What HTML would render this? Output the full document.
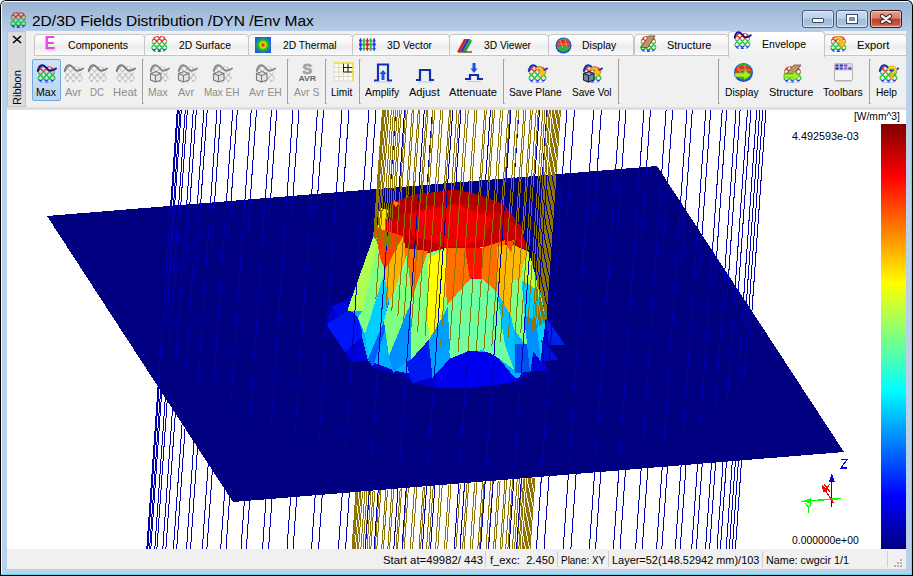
<!DOCTYPE html>
<html><head><meta charset="utf-8"><style>
html,body{margin:0;padding:0;width:913px;height:576px;overflow:hidden;background:#fff;font-family:"Liberation Sans", sans-serif}
</style></head><body>
<div style="position:relative;width:913px;height:576px;overflow:hidden">
<div style="position:absolute;left:0;top:0;width:913px;height:576px;background:#000;border-radius:6px 6px 0 0"></div>
<div style="position:absolute;left:1px;top:1px;width:911px;height:574px;background:#62d6ea;border-radius:5px 5px 0 0"></div>
<div style="position:absolute;left:1px;top:1px;width:910px;height:573px;background:#f4f8fc;border-radius:5px 5px 0 0"></div>
<div style="position:absolute;left:2px;top:2px;width:909px;height:572px;background:#bad1ea;border-radius:4px 4px 0 0"></div>
<div style="position:absolute;left:2px;top:2px;width:909px;height:29px;background:linear-gradient(#97b3d2,#b6cde7);border-radius:4px 4px 0 0"></div>
<svg style="position:absolute;left:8.7px;top:8.1px;" width="21" height="21" viewBox="0 0 21 21"><g transform="scale(0.89,0.97)"><defs><clipPath id="mc1"><path d="M2 10 Q2 4 10.5 4 Q19 4 19 10 L19.5 17 Q17 20.5 14 20.5 L7 20.5 Q3 20.5 1.5 17 Z"/></clipPath></defs><g clip-path="url(#mc1)" fill="none" stroke-width="1.5"><g clip-path="inset(0)"><path d="M-30.0 2 Q-22.0 10 -11.0 22 M-9.0 2 Q-17.0 10 -28.0 22 M-24.0 2 Q-16.0 10 -5.0 22 M-3.0 2 Q-11.0 10 -22.0 22 M-18.0 2 Q-10.0 10 1.0 22 M3.0 2 Q-5.0 10 -16.0 22 M-12.0 2 Q-4.0 10 7.0 22 M9.0 2 Q1.0 10 -10.0 22 M-6.0 2 Q2.0 10 13.0 22 M15.0 2 Q7.0 10 -4.0 22 M0.0 2 Q8.0 10 19.0 22 M21.0 2 Q13.0 10 2.0 22 M6.0 2 Q14.0 10 25.0 22 M27.0 2 Q19.0 10 8.0 22 M12.0 2 Q20.0 10 31.0 22 M33.0 2 Q25.0 10 14.0 22 M18.0 2 Q26.0 10 37.0 22 M39.0 2 Q31.0 10 20.0 22 M24.0 2 Q32.0 10 43.0 22 M45.0 2 Q37.0 10 26.0 22 M30.0 2 Q38.0 10 49.0 22 M51.0 2 Q43.0 10 32.0 22 " stroke="#e83a28" style="clip-path:inset(0 0 12px 0)"/></g><path d="M-30.0 2 Q-22.0 10 -11.0 22 M-9.0 2 Q-17.0 10 -28.0 22 M-24.0 2 Q-16.0 10 -5.0 22 M-3.0 2 Q-11.0 10 -22.0 22 M-18.0 2 Q-10.0 10 1.0 22 M3.0 2 Q-5.0 10 -16.0 22 M-12.0 2 Q-4.0 10 7.0 22 M9.0 2 Q1.0 10 -10.0 22 M-6.0 2 Q2.0 10 13.0 22 M15.0 2 Q7.0 10 -4.0 22 M0.0 2 Q8.0 10 19.0 22 M21.0 2 Q13.0 10 2.0 22 M6.0 2 Q14.0 10 25.0 22 M27.0 2 Q19.0 10 8.0 22 M12.0 2 Q20.0 10 31.0 22 M33.0 2 Q25.0 10 14.0 22 M18.0 2 Q26.0 10 37.0 22 M39.0 2 Q31.0 10 20.0 22 M24.0 2 Q32.0 10 43.0 22 M45.0 2 Q37.0 10 26.0 22 M30.0 2 Q38.0 10 49.0 22 M51.0 2 Q43.0 10 32.0 22 " stroke="#22c838" style="clip-path:inset(9px 0 5px 0)"/><path d="M-30.0 2 Q-22.0 10 -11.0 22 M-9.0 2 Q-17.0 10 -28.0 22 M-24.0 2 Q-16.0 10 -5.0 22 M-3.0 2 Q-11.0 10 -22.0 22 M-18.0 2 Q-10.0 10 1.0 22 M3.0 2 Q-5.0 10 -16.0 22 M-12.0 2 Q-4.0 10 7.0 22 M9.0 2 Q1.0 10 -10.0 22 M-6.0 2 Q2.0 10 13.0 22 M15.0 2 Q7.0 10 -4.0 22 M0.0 2 Q8.0 10 19.0 22 M21.0 2 Q13.0 10 2.0 22 M6.0 2 Q14.0 10 25.0 22 M27.0 2 Q19.0 10 8.0 22 M12.0 2 Q20.0 10 31.0 22 M33.0 2 Q25.0 10 14.0 22 M18.0 2 Q26.0 10 37.0 22 M39.0 2 Q31.0 10 20.0 22 M24.0 2 Q32.0 10 43.0 22 M45.0 2 Q37.0 10 26.0 22 M30.0 2 Q38.0 10 49.0 22 M51.0 2 Q43.0 10 32.0 22 " stroke="#2a4ae8" style="clip-path:inset(16px 0 0 0)"/></g></g></svg>
<div style="position:absolute;left:802px;top:10px;width:30px;height:16px;border:1px solid #4a5a78;border-radius:3px;background:linear-gradient(#c8daee 0%,#bcd2ea 45%,#9fbbd9 50%,#a9c4e0 85%,#c4d8ee 100%);box-shadow:inset 0 0 0 1px rgba(255,255,255,0.45)"></div>
<div style="position:absolute;left:836px;top:10px;width:30px;height:16px;border:1px solid #4a5a78;border-radius:3px;background:linear-gradient(#c8daee 0%,#bcd2ea 45%,#9fbbd9 50%,#a9c4e0 85%,#c4d8ee 100%);box-shadow:inset 0 0 0 1px rgba(255,255,255,0.45)"></div>
<div style="position:absolute;left:870px;top:10px;width:30px;height:16px;border:1px solid #3a1a1a;border-radius:3px;background:linear-gradient(#e8a090 0%,#d7826e 45%,#b8402c 50%,#c85a40 85%,#e09080 100%);box-shadow:inset 0 0 0 1px rgba(255,255,255,0.45)"></div>
<div style="position:absolute;left:812px;top:18px;width:10px;height:3px;background:#fff;border:1px solid #3c4a60;border-radius:1px"></div>
<div style="position:absolute;left:847px;top:15px;width:6px;height:4px;border:2px solid #fff;border-top-width:2px;outline:1px solid #3c4a60;background:#7890b0"></div>
<svg style="position:absolute;left:877px;top:12px;" width="18" height="13" viewBox="0 0 18 13"><path d="M5 4 L13 10 M13 4 L5 10" stroke="#3a2020" stroke-width="4.4" stroke-linecap="round"/><path d="M5 4 L13 10 M13 4 L5 10" stroke="#f8f0f0" stroke-width="2.4" stroke-linecap="round"/></svg>
<div style="position:absolute;left:7px;top:31px;width:899px;height:538px;background:#f0f0f0"></div>
<div style="position:absolute;left:7px;top:31px;width:17px;height:74px;border:1px solid #c4c4c4;background:#dcdcdc"></div>
<svg style="position:absolute;left:12px;top:35px;" width="10" height="9" viewBox="0 0 10 9"><path d="M1 1 L9 8 M9 1 L1 8" stroke="#000" stroke-width="1.6"/></svg>
<div style="position:absolute;left:7px;top:107px;width:899px;height:3px;background:#dfdfdf"></div>
<div style="position:absolute;left:34px;top:34px;width:109px;height:20px;border:1px solid #c6c6c6;border-radius:4px 4px 0 0;background:linear-gradient(#ffffff,#f4f4f4 45%,#ececec 55%,#fafafa)"></div>
<svg style="position:absolute;left:44px;top:35.5px;" width="17" height="17" viewBox="0 0 17 17"><ellipse cx="6.5" cy="13.5" rx="5.5" ry="1.5" fill="#d4d4d4"/><text x="0.5" y="13" font-family="Liberation Sans" font-weight="bold" font-size="17.5" fill="#e048e0" transform="scale(0.92,1)">E</text></svg>
<div style="position:absolute;left:144px;top:34px;width:103px;height:20px;border:1px solid #c6c6c6;border-radius:4px 4px 0 0;background:linear-gradient(#ffffff,#f4f4f4 45%,#ececec 55%,#fafafa)"></div>
<svg style="position:absolute;left:149.7px;top:32.2px;" width="21" height="21" viewBox="0 0 21 21"><g transform="scale(0.89,0.97)"><defs><clipPath id="mc2"><path d="M2 10 Q2 4 10.5 4 Q19 4 19 10 L19.5 17 Q17 20.5 14 20.5 L7 20.5 Q3 20.5 1.5 17 Z"/></clipPath></defs><g clip-path="url(#mc2)" fill="none" stroke-width="1.5"><g clip-path="inset(0)"><path d="M-30.0 2 Q-22.0 10 -11.0 22 M-9.0 2 Q-17.0 10 -28.0 22 M-24.0 2 Q-16.0 10 -5.0 22 M-3.0 2 Q-11.0 10 -22.0 22 M-18.0 2 Q-10.0 10 1.0 22 M3.0 2 Q-5.0 10 -16.0 22 M-12.0 2 Q-4.0 10 7.0 22 M9.0 2 Q1.0 10 -10.0 22 M-6.0 2 Q2.0 10 13.0 22 M15.0 2 Q7.0 10 -4.0 22 M0.0 2 Q8.0 10 19.0 22 M21.0 2 Q13.0 10 2.0 22 M6.0 2 Q14.0 10 25.0 22 M27.0 2 Q19.0 10 8.0 22 M12.0 2 Q20.0 10 31.0 22 M33.0 2 Q25.0 10 14.0 22 M18.0 2 Q26.0 10 37.0 22 M39.0 2 Q31.0 10 20.0 22 M24.0 2 Q32.0 10 43.0 22 M45.0 2 Q37.0 10 26.0 22 M30.0 2 Q38.0 10 49.0 22 M51.0 2 Q43.0 10 32.0 22 " stroke="#e83a28" style="clip-path:inset(0 0 12px 0)"/></g><path d="M-30.0 2 Q-22.0 10 -11.0 22 M-9.0 2 Q-17.0 10 -28.0 22 M-24.0 2 Q-16.0 10 -5.0 22 M-3.0 2 Q-11.0 10 -22.0 22 M-18.0 2 Q-10.0 10 1.0 22 M3.0 2 Q-5.0 10 -16.0 22 M-12.0 2 Q-4.0 10 7.0 22 M9.0 2 Q1.0 10 -10.0 22 M-6.0 2 Q2.0 10 13.0 22 M15.0 2 Q7.0 10 -4.0 22 M0.0 2 Q8.0 10 19.0 22 M21.0 2 Q13.0 10 2.0 22 M6.0 2 Q14.0 10 25.0 22 M27.0 2 Q19.0 10 8.0 22 M12.0 2 Q20.0 10 31.0 22 M33.0 2 Q25.0 10 14.0 22 M18.0 2 Q26.0 10 37.0 22 M39.0 2 Q31.0 10 20.0 22 M24.0 2 Q32.0 10 43.0 22 M45.0 2 Q37.0 10 26.0 22 M30.0 2 Q38.0 10 49.0 22 M51.0 2 Q43.0 10 32.0 22 " stroke="#22c838" style="clip-path:inset(9px 0 5px 0)"/><path d="M-30.0 2 Q-22.0 10 -11.0 22 M-9.0 2 Q-17.0 10 -28.0 22 M-24.0 2 Q-16.0 10 -5.0 22 M-3.0 2 Q-11.0 10 -22.0 22 M-18.0 2 Q-10.0 10 1.0 22 M3.0 2 Q-5.0 10 -16.0 22 M-12.0 2 Q-4.0 10 7.0 22 M9.0 2 Q1.0 10 -10.0 22 M-6.0 2 Q2.0 10 13.0 22 M15.0 2 Q7.0 10 -4.0 22 M0.0 2 Q8.0 10 19.0 22 M21.0 2 Q13.0 10 2.0 22 M6.0 2 Q14.0 10 25.0 22 M27.0 2 Q19.0 10 8.0 22 M12.0 2 Q20.0 10 31.0 22 M33.0 2 Q25.0 10 14.0 22 M18.0 2 Q26.0 10 37.0 22 M39.0 2 Q31.0 10 20.0 22 M24.0 2 Q32.0 10 43.0 22 M45.0 2 Q37.0 10 26.0 22 M30.0 2 Q38.0 10 49.0 22 M51.0 2 Q43.0 10 32.0 22 " stroke="#2a4ae8" style="clip-path:inset(16px 0 0 0)"/></g></g></svg>
<div style="position:absolute;left:248px;top:34px;width:103px;height:20px;border:1px solid #c6c6c6;border-radius:4px 4px 0 0;background:linear-gradient(#ffffff,#f4f4f4 45%,#ececec 55%,#fafafa)"></div>
<svg style="position:absolute;left:255px;top:37px;" width="17" height="17" viewBox="0 0 17 17"><defs><radialGradient id="th"><stop offset="0" stop-color="#e00000"/><stop offset="0.35" stop-color="#e0e000"/><stop offset="0.6" stop-color="#20c020"/><stop offset="1" stop-color="#2060e0"/></radialGradient></defs><rect x="0" y="0" width="16" height="16" fill="url(#th)"/></svg>
<div style="position:absolute;left:352px;top:34px;width:96px;height:20px;border:1px solid #c6c6c6;border-radius:4px 4px 0 0;background:linear-gradient(#ffffff,#f4f4f4 45%,#ececec 55%,#fafafa)"></div>
<svg style="position:absolute;left:359px;top:37px;" width="17" height="17" viewBox="0 0 17 17"><path d="M1.5 13 V2.5" stroke="#2040f0" stroke-width="1.6"/><path d="M-0.3 4.5 L1.5 0.5 L3.3 4.5 Z M-0.3 11 L1.5 14.5 L3.3 11 Z" fill="#2040f0"/><path d="M-0.2 7.5 H3.2" stroke="#2040f0" stroke-width="2.2"/><path d="M4.9 13 V2.5" stroke="#20c040" stroke-width="1.6"/><path d="M3.1 4.5 L4.9 0.5 L6.7 4.5 Z M3.1 11 L4.9 14.5 L6.7 11 Z" fill="#20c040"/><path d="M3.2 7.5 H6.6" stroke="#20c040" stroke-width="2.2"/><path d="M8.3 13 V2.5" stroke="#e02020" stroke-width="1.6"/><path d="M6.5 4.5 L8.3 0.5 L10.1 4.5 Z M6.5 11 L8.3 14.5 L10.1 11 Z" fill="#e02020"/><path d="M6.6 7.5 H10.0" stroke="#e02020" stroke-width="2.2"/><path d="M11.7 13 V2.5" stroke="#20c040" stroke-width="1.6"/><path d="M9.9 4.5 L11.7 0.5 L13.5 4.5 Z M9.9 11 L11.7 14.5 L13.5 11 Z" fill="#20c040"/><path d="M10.0 7.5 H13.4" stroke="#20c040" stroke-width="2.2"/><path d="M15.1 13 V2.5" stroke="#2040f0" stroke-width="1.6"/><path d="M13.3 4.5 L15.1 0.5 L16.9 4.5 Z M13.3 11 L15.1 14.5 L16.9 11 Z" fill="#2040f0"/><path d="M13.4 7.5 H16.8" stroke="#2040f0" stroke-width="2.2"/></svg>
<div style="position:absolute;left:449px;top:34px;width:98px;height:20px;border:1px solid #c6c6c6;border-radius:4px 4px 0 0;background:linear-gradient(#ffffff,#f4f4f4 45%,#ececec 55%,#fafafa)"></div>
<svg style="position:absolute;left:456px;top:37px;" width="17" height="17" viewBox="0 0 17 17"><path d="M1 15 L8 2 L11 2 L4 15 Z" fill="#d02020"/><path d="M4 15 L11 2 L14 2 L7 15 Z" fill="#2040c0"/><path d="M7 15 L14 2 L16 4 L10 15 Z" fill="#30a030"/><path d="M2 15 H16" stroke="#805020" stroke-width="1.5"/></svg>
<div style="position:absolute;left:548px;top:34px;width:84px;height:20px;border:1px solid #c6c6c6;border-radius:4px 4px 0 0;background:linear-gradient(#ffffff,#f4f4f4 45%,#ececec 55%,#fafafa)"></div>
<svg style="position:absolute;left:555px;top:37px;" width="17" height="17" viewBox="0 0 17 17"><circle cx="8.5" cy="8.5" r="8" fill="#2050d0"/><circle cx="8.5" cy="8" r="6.8" fill="#30b040"/><path d="M2 5 Q8.5 0 15 5 L14 10 Q8.5 6 3 10 Z" fill="#e03020"/><path d="M3 7 H14 M5 3 L8 11 M10 2 L12 10" stroke="#f09070" stroke-width="0.9"/></svg>
<div style="position:absolute;left:634px;top:34px;width:93px;height:20px;border:1px solid #c6c6c6;border-radius:4px 4px 0 0;background:linear-gradient(#ffffff,#f4f4f4 45%,#ececec 55%,#fafafa)"></div>
<svg style="position:absolute;left:638.7px;top:32.2px;" width="21" height="21" viewBox="0 0 21 21"><g transform="scale(0.89,0.97)"><defs><clipPath id="mc7"><path d="M2 10 Q2 4 10.5 4 Q19 4 19 10 L19.5 17 Q17 20.5 14 20.5 L7 20.5 Q3 20.5 1.5 17 Z"/></clipPath></defs><g clip-path="url(#mc7)" fill="none" stroke-width="1.5"><g clip-path="inset(0)"><path d="M-30.0 2 Q-22.0 10 -11.0 22 M-9.0 2 Q-17.0 10 -28.0 22 M-24.0 2 Q-16.0 10 -5.0 22 M-3.0 2 Q-11.0 10 -22.0 22 M-18.0 2 Q-10.0 10 1.0 22 M3.0 2 Q-5.0 10 -16.0 22 M-12.0 2 Q-4.0 10 7.0 22 M9.0 2 Q1.0 10 -10.0 22 M-6.0 2 Q2.0 10 13.0 22 M15.0 2 Q7.0 10 -4.0 22 M0.0 2 Q8.0 10 19.0 22 M21.0 2 Q13.0 10 2.0 22 M6.0 2 Q14.0 10 25.0 22 M27.0 2 Q19.0 10 8.0 22 M12.0 2 Q20.0 10 31.0 22 M33.0 2 Q25.0 10 14.0 22 M18.0 2 Q26.0 10 37.0 22 M39.0 2 Q31.0 10 20.0 22 M24.0 2 Q32.0 10 43.0 22 M45.0 2 Q37.0 10 26.0 22 M30.0 2 Q38.0 10 49.0 22 M51.0 2 Q43.0 10 32.0 22 " stroke="#e83a28" style="clip-path:inset(0 0 12px 0)"/></g><path d="M-30.0 2 Q-22.0 10 -11.0 22 M-9.0 2 Q-17.0 10 -28.0 22 M-24.0 2 Q-16.0 10 -5.0 22 M-3.0 2 Q-11.0 10 -22.0 22 M-18.0 2 Q-10.0 10 1.0 22 M3.0 2 Q-5.0 10 -16.0 22 M-12.0 2 Q-4.0 10 7.0 22 M9.0 2 Q1.0 10 -10.0 22 M-6.0 2 Q2.0 10 13.0 22 M15.0 2 Q7.0 10 -4.0 22 M0.0 2 Q8.0 10 19.0 22 M21.0 2 Q13.0 10 2.0 22 M6.0 2 Q14.0 10 25.0 22 M27.0 2 Q19.0 10 8.0 22 M12.0 2 Q20.0 10 31.0 22 M33.0 2 Q25.0 10 14.0 22 M18.0 2 Q26.0 10 37.0 22 M39.0 2 Q31.0 10 20.0 22 M24.0 2 Q32.0 10 43.0 22 M45.0 2 Q37.0 10 26.0 22 M30.0 2 Q38.0 10 49.0 22 M51.0 2 Q43.0 10 32.0 22 " stroke="#22c838" style="clip-path:inset(9px 0 5px 0)"/><path d="M-30.0 2 Q-22.0 10 -11.0 22 M-9.0 2 Q-17.0 10 -28.0 22 M-24.0 2 Q-16.0 10 -5.0 22 M-3.0 2 Q-11.0 10 -22.0 22 M-18.0 2 Q-10.0 10 1.0 22 M3.0 2 Q-5.0 10 -16.0 22 M-12.0 2 Q-4.0 10 7.0 22 M9.0 2 Q1.0 10 -10.0 22 M-6.0 2 Q2.0 10 13.0 22 M15.0 2 Q7.0 10 -4.0 22 M0.0 2 Q8.0 10 19.0 22 M21.0 2 Q13.0 10 2.0 22 M6.0 2 Q14.0 10 25.0 22 M27.0 2 Q19.0 10 8.0 22 M12.0 2 Q20.0 10 31.0 22 M33.0 2 Q25.0 10 14.0 22 M18.0 2 Q26.0 10 37.0 22 M39.0 2 Q31.0 10 20.0 22 M24.0 2 Q32.0 10 43.0 22 M45.0 2 Q37.0 10 26.0 22 M30.0 2 Q38.0 10 49.0 22 M51.0 2 Q43.0 10 32.0 22 " stroke="#2a4ae8" style="clip-path:inset(16px 0 0 0)"/></g><path d="M2 16 L11 4 L18 4 L10 16 Z" fill="#b89868" stroke="#6a5030" stroke-width="0.9"/></g></svg>
<div style="position:absolute;left:728px;top:31px;width:95px;height:25px;border:1px solid #c6c6c6;border-bottom:none;border-radius:4px 4px 0 0;background:linear-gradient(#ffffff,#f6f6f6 60%,#f0f0f0)"></div>
<svg style="position:absolute;left:732.7px;top:29.2px;" width="21" height="21" viewBox="0 0 21 21"><g transform="scale(0.89,0.97)"><defs><clipPath id="mc12"><path d="M2 10 Q2 4 10.5 4 Q19 4 19 10 L19.5 17 Q17 20.5 14 20.5 L7 20.5 Q3 20.5 1.5 17 Z"/></clipPath></defs><g clip-path="url(#mc12)" fill="none" stroke-width="1.5"><g clip-path="inset(0)"><path d="M-30.0 2 Q-22.0 10 -11.0 22 M-9.0 2 Q-17.0 10 -28.0 22 M-24.0 2 Q-16.0 10 -5.0 22 M-3.0 2 Q-11.0 10 -22.0 22 M-18.0 2 Q-10.0 10 1.0 22 M3.0 2 Q-5.0 10 -16.0 22 M-12.0 2 Q-4.0 10 7.0 22 M9.0 2 Q1.0 10 -10.0 22 M-6.0 2 Q2.0 10 13.0 22 M15.0 2 Q7.0 10 -4.0 22 M0.0 2 Q8.0 10 19.0 22 M21.0 2 Q13.0 10 2.0 22 M6.0 2 Q14.0 10 25.0 22 M27.0 2 Q19.0 10 8.0 22 M12.0 2 Q20.0 10 31.0 22 M33.0 2 Q25.0 10 14.0 22 M18.0 2 Q26.0 10 37.0 22 M39.0 2 Q31.0 10 20.0 22 M24.0 2 Q32.0 10 43.0 22 M45.0 2 Q37.0 10 26.0 22 M30.0 2 Q38.0 10 49.0 22 M51.0 2 Q43.0 10 32.0 22 " stroke="#e83a28" style="clip-path:inset(0 0 12px 0)"/></g><path d="M-30.0 2 Q-22.0 10 -11.0 22 M-9.0 2 Q-17.0 10 -28.0 22 M-24.0 2 Q-16.0 10 -5.0 22 M-3.0 2 Q-11.0 10 -22.0 22 M-18.0 2 Q-10.0 10 1.0 22 M3.0 2 Q-5.0 10 -16.0 22 M-12.0 2 Q-4.0 10 7.0 22 M9.0 2 Q1.0 10 -10.0 22 M-6.0 2 Q2.0 10 13.0 22 M15.0 2 Q7.0 10 -4.0 22 M0.0 2 Q8.0 10 19.0 22 M21.0 2 Q13.0 10 2.0 22 M6.0 2 Q14.0 10 25.0 22 M27.0 2 Q19.0 10 8.0 22 M12.0 2 Q20.0 10 31.0 22 M33.0 2 Q25.0 10 14.0 22 M18.0 2 Q26.0 10 37.0 22 M39.0 2 Q31.0 10 20.0 22 M24.0 2 Q32.0 10 43.0 22 M45.0 2 Q37.0 10 26.0 22 M30.0 2 Q38.0 10 49.0 22 M51.0 2 Q43.0 10 32.0 22 " stroke="#22c838" style="clip-path:inset(9px 0 5px 0)"/><path d="M-30.0 2 Q-22.0 10 -11.0 22 M-9.0 2 Q-17.0 10 -28.0 22 M-24.0 2 Q-16.0 10 -5.0 22 M-3.0 2 Q-11.0 10 -22.0 22 M-18.0 2 Q-10.0 10 1.0 22 M3.0 2 Q-5.0 10 -16.0 22 M-12.0 2 Q-4.0 10 7.0 22 M9.0 2 Q1.0 10 -10.0 22 M-6.0 2 Q2.0 10 13.0 22 M15.0 2 Q7.0 10 -4.0 22 M0.0 2 Q8.0 10 19.0 22 M21.0 2 Q13.0 10 2.0 22 M6.0 2 Q14.0 10 25.0 22 M27.0 2 Q19.0 10 8.0 22 M12.0 2 Q20.0 10 31.0 22 M33.0 2 Q25.0 10 14.0 22 M18.0 2 Q26.0 10 37.0 22 M39.0 2 Q31.0 10 20.0 22 M24.0 2 Q32.0 10 43.0 22 M45.0 2 Q37.0 10 26.0 22 M30.0 2 Q38.0 10 49.0 22 M51.0 2 Q43.0 10 32.0 22 " stroke="#2a4ae8" style="clip-path:inset(16px 0 0 0)"/></g><path d="M1.8 9 C3 3, 7 1.5, 10 5.5 S15.5 9.5, 20 6.5" stroke="#10108c" stroke-width="2" fill="none" stroke-linecap="round"/></g></svg>
<div style="position:absolute;left:824px;top:34px;width:81px;height:20px;border:1px solid #c6c6c6;border-radius:4px 4px 0 0;background:linear-gradient(#ffffff,#f4f4f4 45%,#ececec 55%,#fafafa)"></div>
<svg style="position:absolute;left:828.7px;top:32.2px;" width="21" height="21" viewBox="0 0 21 21"><g transform="scale(0.89,0.97)"><defs><clipPath id="mc17"><path d="M2 10 Q2 4 10.5 4 Q19 4 19 10 L19.5 17 Q17 20.5 14 20.5 L7 20.5 Q3 20.5 1.5 17 Z"/></clipPath></defs><g clip-path="url(#mc17)" fill="none" stroke-width="1.5"><g clip-path="inset(0)"><path d="M-30.0 2 Q-22.0 10 -11.0 22 M-9.0 2 Q-17.0 10 -28.0 22 M-24.0 2 Q-16.0 10 -5.0 22 M-3.0 2 Q-11.0 10 -22.0 22 M-18.0 2 Q-10.0 10 1.0 22 M3.0 2 Q-5.0 10 -16.0 22 M-12.0 2 Q-4.0 10 7.0 22 M9.0 2 Q1.0 10 -10.0 22 M-6.0 2 Q2.0 10 13.0 22 M15.0 2 Q7.0 10 -4.0 22 M0.0 2 Q8.0 10 19.0 22 M21.0 2 Q13.0 10 2.0 22 M6.0 2 Q14.0 10 25.0 22 M27.0 2 Q19.0 10 8.0 22 M12.0 2 Q20.0 10 31.0 22 M33.0 2 Q25.0 10 14.0 22 M18.0 2 Q26.0 10 37.0 22 M39.0 2 Q31.0 10 20.0 22 M24.0 2 Q32.0 10 43.0 22 M45.0 2 Q37.0 10 26.0 22 M30.0 2 Q38.0 10 49.0 22 M51.0 2 Q43.0 10 32.0 22 " stroke="#e83a28" style="clip-path:inset(0 0 12px 0)"/></g><path d="M-30.0 2 Q-22.0 10 -11.0 22 M-9.0 2 Q-17.0 10 -28.0 22 M-24.0 2 Q-16.0 10 -5.0 22 M-3.0 2 Q-11.0 10 -22.0 22 M-18.0 2 Q-10.0 10 1.0 22 M3.0 2 Q-5.0 10 -16.0 22 M-12.0 2 Q-4.0 10 7.0 22 M9.0 2 Q1.0 10 -10.0 22 M-6.0 2 Q2.0 10 13.0 22 M15.0 2 Q7.0 10 -4.0 22 M0.0 2 Q8.0 10 19.0 22 M21.0 2 Q13.0 10 2.0 22 M6.0 2 Q14.0 10 25.0 22 M27.0 2 Q19.0 10 8.0 22 M12.0 2 Q20.0 10 31.0 22 M33.0 2 Q25.0 10 14.0 22 M18.0 2 Q26.0 10 37.0 22 M39.0 2 Q31.0 10 20.0 22 M24.0 2 Q32.0 10 43.0 22 M45.0 2 Q37.0 10 26.0 22 M30.0 2 Q38.0 10 49.0 22 M51.0 2 Q43.0 10 32.0 22 " stroke="#22c838" style="clip-path:inset(9px 0 5px 0)"/><path d="M-30.0 2 Q-22.0 10 -11.0 22 M-9.0 2 Q-17.0 10 -28.0 22 M-24.0 2 Q-16.0 10 -5.0 22 M-3.0 2 Q-11.0 10 -22.0 22 M-18.0 2 Q-10.0 10 1.0 22 M3.0 2 Q-5.0 10 -16.0 22 M-12.0 2 Q-4.0 10 7.0 22 M9.0 2 Q1.0 10 -10.0 22 M-6.0 2 Q2.0 10 13.0 22 M15.0 2 Q7.0 10 -4.0 22 M0.0 2 Q8.0 10 19.0 22 M21.0 2 Q13.0 10 2.0 22 M6.0 2 Q14.0 10 25.0 22 M27.0 2 Q19.0 10 8.0 22 M12.0 2 Q20.0 10 31.0 22 M33.0 2 Q25.0 10 14.0 22 M18.0 2 Q26.0 10 37.0 22 M39.0 2 Q31.0 10 20.0 22 M24.0 2 Q32.0 10 43.0 22 M45.0 2 Q37.0 10 26.0 22 M30.0 2 Q38.0 10 49.0 22 M51.0 2 Q43.0 10 32.0 22 " stroke="#2a4ae8" style="clip-path:inset(16px 0 0 0)"/></g><path d="M7 5 Q15 3 16 10 L19 10 L14.5 17 L10 10 L12.5 10 Q12 7 7 7.5 Z" fill="#f8c020" stroke="#d09000" stroke-width="0.6"/></g></svg>
<div style="position:absolute;left:32px;top:59px;width:27px;height:40px;border:1px solid #70a8e2;border-radius:2px;background:linear-gradient(#cfe3f8,#b9d5f2)"></div>
<div style="position:absolute;left:142px;top:59px;width:1px;height:45px;background:#a0a0a0"></div><div style="position:absolute;left:143px;top:59px;width:1px;height:1px;background:#b8b8b8"></div><div style="position:absolute;left:143px;top:103px;width:1px;height:1px;background:#b8b8b8"></div>
<div style="position:absolute;left:287px;top:59px;width:1px;height:45px;background:#a0a0a0"></div><div style="position:absolute;left:288px;top:59px;width:1px;height:1px;background:#b8b8b8"></div><div style="position:absolute;left:288px;top:103px;width:1px;height:1px;background:#b8b8b8"></div>
<div style="position:absolute;left:325px;top:59px;width:1px;height:45px;background:#a0a0a0"></div><div style="position:absolute;left:326px;top:59px;width:1px;height:1px;background:#b8b8b8"></div><div style="position:absolute;left:326px;top:103px;width:1px;height:1px;background:#b8b8b8"></div>
<div style="position:absolute;left:359px;top:59px;width:1px;height:45px;background:#a0a0a0"></div><div style="position:absolute;left:360px;top:59px;width:1px;height:1px;background:#b8b8b8"></div><div style="position:absolute;left:360px;top:103px;width:1px;height:1px;background:#b8b8b8"></div>
<div style="position:absolute;left:503px;top:59px;width:1px;height:45px;background:#a0a0a0"></div><div style="position:absolute;left:504px;top:59px;width:1px;height:1px;background:#b8b8b8"></div><div style="position:absolute;left:504px;top:103px;width:1px;height:1px;background:#b8b8b8"></div>
<div style="position:absolute;left:618px;top:59px;width:1px;height:45px;background:#a0a0a0"></div><div style="position:absolute;left:619px;top:59px;width:1px;height:1px;background:#b8b8b8"></div><div style="position:absolute;left:619px;top:103px;width:1px;height:1px;background:#b8b8b8"></div>
<div style="position:absolute;left:718px;top:59px;width:1px;height:45px;background:#a0a0a0"></div><div style="position:absolute;left:719px;top:59px;width:1px;height:1px;background:#b8b8b8"></div><div style="position:absolute;left:719px;top:103px;width:1px;height:1px;background:#b8b8b8"></div>
<div style="position:absolute;left:869px;top:59px;width:1px;height:45px;background:#a0a0a0"></div><div style="position:absolute;left:870px;top:59px;width:1px;height:1px;background:#b8b8b8"></div><div style="position:absolute;left:870px;top:103px;width:1px;height:1px;background:#b8b8b8"></div>
<svg style="position:absolute;left:36px;top:62px;" width="21" height="21" viewBox="0 0 21 21"><defs><clipPath id="mc18"><path d="M2 10 Q2 4 10.5 4 Q19 4 19 10 L19.5 17 Q17 20.5 14 20.5 L7 20.5 Q3 20.5 1.5 17 Z"/></clipPath></defs><g clip-path="url(#mc18)" fill="none" stroke-width="1.5"><g clip-path="inset(0)"><path d="M-30.0 2 Q-22.0 10 -11.0 22 M-9.0 2 Q-17.0 10 -28.0 22 M-24.0 2 Q-16.0 10 -5.0 22 M-3.0 2 Q-11.0 10 -22.0 22 M-18.0 2 Q-10.0 10 1.0 22 M3.0 2 Q-5.0 10 -16.0 22 M-12.0 2 Q-4.0 10 7.0 22 M9.0 2 Q1.0 10 -10.0 22 M-6.0 2 Q2.0 10 13.0 22 M15.0 2 Q7.0 10 -4.0 22 M0.0 2 Q8.0 10 19.0 22 M21.0 2 Q13.0 10 2.0 22 M6.0 2 Q14.0 10 25.0 22 M27.0 2 Q19.0 10 8.0 22 M12.0 2 Q20.0 10 31.0 22 M33.0 2 Q25.0 10 14.0 22 M18.0 2 Q26.0 10 37.0 22 M39.0 2 Q31.0 10 20.0 22 M24.0 2 Q32.0 10 43.0 22 M45.0 2 Q37.0 10 26.0 22 M30.0 2 Q38.0 10 49.0 22 M51.0 2 Q43.0 10 32.0 22 " stroke="#e83a28" style="clip-path:inset(0 0 12px 0)"/></g><path d="M-30.0 2 Q-22.0 10 -11.0 22 M-9.0 2 Q-17.0 10 -28.0 22 M-24.0 2 Q-16.0 10 -5.0 22 M-3.0 2 Q-11.0 10 -22.0 22 M-18.0 2 Q-10.0 10 1.0 22 M3.0 2 Q-5.0 10 -16.0 22 M-12.0 2 Q-4.0 10 7.0 22 M9.0 2 Q1.0 10 -10.0 22 M-6.0 2 Q2.0 10 13.0 22 M15.0 2 Q7.0 10 -4.0 22 M0.0 2 Q8.0 10 19.0 22 M21.0 2 Q13.0 10 2.0 22 M6.0 2 Q14.0 10 25.0 22 M27.0 2 Q19.0 10 8.0 22 M12.0 2 Q20.0 10 31.0 22 M33.0 2 Q25.0 10 14.0 22 M18.0 2 Q26.0 10 37.0 22 M39.0 2 Q31.0 10 20.0 22 M24.0 2 Q32.0 10 43.0 22 M45.0 2 Q37.0 10 26.0 22 M30.0 2 Q38.0 10 49.0 22 M51.0 2 Q43.0 10 32.0 22 " stroke="#22c838" style="clip-path:inset(9px 0 5px 0)"/><path d="M-30.0 2 Q-22.0 10 -11.0 22 M-9.0 2 Q-17.0 10 -28.0 22 M-24.0 2 Q-16.0 10 -5.0 22 M-3.0 2 Q-11.0 10 -22.0 22 M-18.0 2 Q-10.0 10 1.0 22 M3.0 2 Q-5.0 10 -16.0 22 M-12.0 2 Q-4.0 10 7.0 22 M9.0 2 Q1.0 10 -10.0 22 M-6.0 2 Q2.0 10 13.0 22 M15.0 2 Q7.0 10 -4.0 22 M0.0 2 Q8.0 10 19.0 22 M21.0 2 Q13.0 10 2.0 22 M6.0 2 Q14.0 10 25.0 22 M27.0 2 Q19.0 10 8.0 22 M12.0 2 Q20.0 10 31.0 22 M33.0 2 Q25.0 10 14.0 22 M18.0 2 Q26.0 10 37.0 22 M39.0 2 Q31.0 10 20.0 22 M24.0 2 Q32.0 10 43.0 22 M45.0 2 Q37.0 10 26.0 22 M30.0 2 Q38.0 10 49.0 22 M51.0 2 Q43.0 10 32.0 22 " stroke="#2a4ae8" style="clip-path:inset(16px 0 0 0)"/></g><path d="M1.8 9 C3 3, 7 1.5, 10 5.5 S15.5 9.5, 20 6.5" stroke="#10108c" stroke-width="2" fill="none" stroke-linecap="round"/></svg>
<svg style="position:absolute;left:63px;top:62px;" width="21" height="21" viewBox="0 0 21 21"><defs><clipPath id="mc19"><path d="M2 10 Q2 4 10.5 4 Q19 4 19 10 L19.5 17 Q17 20.5 14 20.5 L7 20.5 Q3 20.5 1.5 17 Z"/></clipPath></defs><g clip-path="url(#mc19)" fill="none" stroke-width="1.0"><g clip-path="inset(0)"><path d="M-30.0 2 Q-22.0 10 -11.0 22 M-9.0 2 Q-17.0 10 -28.0 22 M-24.0 2 Q-16.0 10 -5.0 22 M-3.0 2 Q-11.0 10 -22.0 22 M-18.0 2 Q-10.0 10 1.0 22 M3.0 2 Q-5.0 10 -16.0 22 M-12.0 2 Q-4.0 10 7.0 22 M9.0 2 Q1.0 10 -10.0 22 M-6.0 2 Q2.0 10 13.0 22 M15.0 2 Q7.0 10 -4.0 22 M0.0 2 Q8.0 10 19.0 22 M21.0 2 Q13.0 10 2.0 22 M6.0 2 Q14.0 10 25.0 22 M27.0 2 Q19.0 10 8.0 22 M12.0 2 Q20.0 10 31.0 22 M33.0 2 Q25.0 10 14.0 22 M18.0 2 Q26.0 10 37.0 22 M39.0 2 Q31.0 10 20.0 22 M24.0 2 Q32.0 10 43.0 22 M45.0 2 Q37.0 10 26.0 22 M30.0 2 Q38.0 10 49.0 22 M51.0 2 Q43.0 10 32.0 22 " stroke="#b0b0b0" style="clip-path:inset(0 0 12px 0)"/></g><path d="M-30.0 2 Q-22.0 10 -11.0 22 M-9.0 2 Q-17.0 10 -28.0 22 M-24.0 2 Q-16.0 10 -5.0 22 M-3.0 2 Q-11.0 10 -22.0 22 M-18.0 2 Q-10.0 10 1.0 22 M3.0 2 Q-5.0 10 -16.0 22 M-12.0 2 Q-4.0 10 7.0 22 M9.0 2 Q1.0 10 -10.0 22 M-6.0 2 Q2.0 10 13.0 22 M15.0 2 Q7.0 10 -4.0 22 M0.0 2 Q8.0 10 19.0 22 M21.0 2 Q13.0 10 2.0 22 M6.0 2 Q14.0 10 25.0 22 M27.0 2 Q19.0 10 8.0 22 M12.0 2 Q20.0 10 31.0 22 M33.0 2 Q25.0 10 14.0 22 M18.0 2 Q26.0 10 37.0 22 M39.0 2 Q31.0 10 20.0 22 M24.0 2 Q32.0 10 43.0 22 M45.0 2 Q37.0 10 26.0 22 M30.0 2 Q38.0 10 49.0 22 M51.0 2 Q43.0 10 32.0 22 " stroke="#b0b0b0" style="clip-path:inset(9px 0 5px 0)"/><path d="M-30.0 2 Q-22.0 10 -11.0 22 M-9.0 2 Q-17.0 10 -28.0 22 M-24.0 2 Q-16.0 10 -5.0 22 M-3.0 2 Q-11.0 10 -22.0 22 M-18.0 2 Q-10.0 10 1.0 22 M3.0 2 Q-5.0 10 -16.0 22 M-12.0 2 Q-4.0 10 7.0 22 M9.0 2 Q1.0 10 -10.0 22 M-6.0 2 Q2.0 10 13.0 22 M15.0 2 Q7.0 10 -4.0 22 M0.0 2 Q8.0 10 19.0 22 M21.0 2 Q13.0 10 2.0 22 M6.0 2 Q14.0 10 25.0 22 M27.0 2 Q19.0 10 8.0 22 M12.0 2 Q20.0 10 31.0 22 M33.0 2 Q25.0 10 14.0 22 M18.0 2 Q26.0 10 37.0 22 M39.0 2 Q31.0 10 20.0 22 M24.0 2 Q32.0 10 43.0 22 M45.0 2 Q37.0 10 26.0 22 M30.0 2 Q38.0 10 49.0 22 M51.0 2 Q43.0 10 32.0 22 " stroke="#b0b0b0" style="clip-path:inset(16px 0 0 0)"/></g><path d="M1.8 9 C3 3, 7 1.5, 10 5.5 S15.5 9.5, 20 6.5" stroke="#7a7a7a" stroke-width="2" fill="none" stroke-linecap="round"/></svg>
<svg style="position:absolute;left:87px;top:62px;" width="21" height="21" viewBox="0 0 21 21"><defs><clipPath id="mc20"><path d="M2 10 Q2 4 10.5 4 Q19 4 19 10 L19.5 17 Q17 20.5 14 20.5 L7 20.5 Q3 20.5 1.5 17 Z"/></clipPath></defs><g clip-path="url(#mc20)" fill="none" stroke-width="1.0"><g clip-path="inset(0)"><path d="M-30.0 2 Q-22.0 10 -11.0 22 M-9.0 2 Q-17.0 10 -28.0 22 M-24.0 2 Q-16.0 10 -5.0 22 M-3.0 2 Q-11.0 10 -22.0 22 M-18.0 2 Q-10.0 10 1.0 22 M3.0 2 Q-5.0 10 -16.0 22 M-12.0 2 Q-4.0 10 7.0 22 M9.0 2 Q1.0 10 -10.0 22 M-6.0 2 Q2.0 10 13.0 22 M15.0 2 Q7.0 10 -4.0 22 M0.0 2 Q8.0 10 19.0 22 M21.0 2 Q13.0 10 2.0 22 M6.0 2 Q14.0 10 25.0 22 M27.0 2 Q19.0 10 8.0 22 M12.0 2 Q20.0 10 31.0 22 M33.0 2 Q25.0 10 14.0 22 M18.0 2 Q26.0 10 37.0 22 M39.0 2 Q31.0 10 20.0 22 M24.0 2 Q32.0 10 43.0 22 M45.0 2 Q37.0 10 26.0 22 M30.0 2 Q38.0 10 49.0 22 M51.0 2 Q43.0 10 32.0 22 " stroke="#b0b0b0" style="clip-path:inset(0 0 12px 0)"/></g><path d="M-30.0 2 Q-22.0 10 -11.0 22 M-9.0 2 Q-17.0 10 -28.0 22 M-24.0 2 Q-16.0 10 -5.0 22 M-3.0 2 Q-11.0 10 -22.0 22 M-18.0 2 Q-10.0 10 1.0 22 M3.0 2 Q-5.0 10 -16.0 22 M-12.0 2 Q-4.0 10 7.0 22 M9.0 2 Q1.0 10 -10.0 22 M-6.0 2 Q2.0 10 13.0 22 M15.0 2 Q7.0 10 -4.0 22 M0.0 2 Q8.0 10 19.0 22 M21.0 2 Q13.0 10 2.0 22 M6.0 2 Q14.0 10 25.0 22 M27.0 2 Q19.0 10 8.0 22 M12.0 2 Q20.0 10 31.0 22 M33.0 2 Q25.0 10 14.0 22 M18.0 2 Q26.0 10 37.0 22 M39.0 2 Q31.0 10 20.0 22 M24.0 2 Q32.0 10 43.0 22 M45.0 2 Q37.0 10 26.0 22 M30.0 2 Q38.0 10 49.0 22 M51.0 2 Q43.0 10 32.0 22 " stroke="#b0b0b0" style="clip-path:inset(9px 0 5px 0)"/><path d="M-30.0 2 Q-22.0 10 -11.0 22 M-9.0 2 Q-17.0 10 -28.0 22 M-24.0 2 Q-16.0 10 -5.0 22 M-3.0 2 Q-11.0 10 -22.0 22 M-18.0 2 Q-10.0 10 1.0 22 M3.0 2 Q-5.0 10 -16.0 22 M-12.0 2 Q-4.0 10 7.0 22 M9.0 2 Q1.0 10 -10.0 22 M-6.0 2 Q2.0 10 13.0 22 M15.0 2 Q7.0 10 -4.0 22 M0.0 2 Q8.0 10 19.0 22 M21.0 2 Q13.0 10 2.0 22 M6.0 2 Q14.0 10 25.0 22 M27.0 2 Q19.0 10 8.0 22 M12.0 2 Q20.0 10 31.0 22 M33.0 2 Q25.0 10 14.0 22 M18.0 2 Q26.0 10 37.0 22 M39.0 2 Q31.0 10 20.0 22 M24.0 2 Q32.0 10 43.0 22 M45.0 2 Q37.0 10 26.0 22 M30.0 2 Q38.0 10 49.0 22 M51.0 2 Q43.0 10 32.0 22 " stroke="#b0b0b0" style="clip-path:inset(16px 0 0 0)"/></g><path d="M1.8 9 C3 3, 7 1.5, 10 5.5 S15.5 9.5, 20 6.5" stroke="#7a7a7a" stroke-width="2" fill="none" stroke-linecap="round"/></svg>
<svg style="position:absolute;left:115px;top:62px;" width="21" height="21" viewBox="0 0 21 21"><defs><clipPath id="mc21"><path d="M2 10 Q2 4 10.5 4 Q19 4 19 10 L19.5 17 Q17 20.5 14 20.5 L7 20.5 Q3 20.5 1.5 17 Z"/></clipPath></defs><g clip-path="url(#mc21)" fill="none" stroke-width="1.0"><g clip-path="inset(0)"><path d="M-30.0 2 Q-22.0 10 -11.0 22 M-9.0 2 Q-17.0 10 -28.0 22 M-24.0 2 Q-16.0 10 -5.0 22 M-3.0 2 Q-11.0 10 -22.0 22 M-18.0 2 Q-10.0 10 1.0 22 M3.0 2 Q-5.0 10 -16.0 22 M-12.0 2 Q-4.0 10 7.0 22 M9.0 2 Q1.0 10 -10.0 22 M-6.0 2 Q2.0 10 13.0 22 M15.0 2 Q7.0 10 -4.0 22 M0.0 2 Q8.0 10 19.0 22 M21.0 2 Q13.0 10 2.0 22 M6.0 2 Q14.0 10 25.0 22 M27.0 2 Q19.0 10 8.0 22 M12.0 2 Q20.0 10 31.0 22 M33.0 2 Q25.0 10 14.0 22 M18.0 2 Q26.0 10 37.0 22 M39.0 2 Q31.0 10 20.0 22 M24.0 2 Q32.0 10 43.0 22 M45.0 2 Q37.0 10 26.0 22 M30.0 2 Q38.0 10 49.0 22 M51.0 2 Q43.0 10 32.0 22 " stroke="#b0b0b0" style="clip-path:inset(0 0 12px 0)"/></g><path d="M-30.0 2 Q-22.0 10 -11.0 22 M-9.0 2 Q-17.0 10 -28.0 22 M-24.0 2 Q-16.0 10 -5.0 22 M-3.0 2 Q-11.0 10 -22.0 22 M-18.0 2 Q-10.0 10 1.0 22 M3.0 2 Q-5.0 10 -16.0 22 M-12.0 2 Q-4.0 10 7.0 22 M9.0 2 Q1.0 10 -10.0 22 M-6.0 2 Q2.0 10 13.0 22 M15.0 2 Q7.0 10 -4.0 22 M0.0 2 Q8.0 10 19.0 22 M21.0 2 Q13.0 10 2.0 22 M6.0 2 Q14.0 10 25.0 22 M27.0 2 Q19.0 10 8.0 22 M12.0 2 Q20.0 10 31.0 22 M33.0 2 Q25.0 10 14.0 22 M18.0 2 Q26.0 10 37.0 22 M39.0 2 Q31.0 10 20.0 22 M24.0 2 Q32.0 10 43.0 22 M45.0 2 Q37.0 10 26.0 22 M30.0 2 Q38.0 10 49.0 22 M51.0 2 Q43.0 10 32.0 22 " stroke="#b0b0b0" style="clip-path:inset(9px 0 5px 0)"/><path d="M-30.0 2 Q-22.0 10 -11.0 22 M-9.0 2 Q-17.0 10 -28.0 22 M-24.0 2 Q-16.0 10 -5.0 22 M-3.0 2 Q-11.0 10 -22.0 22 M-18.0 2 Q-10.0 10 1.0 22 M3.0 2 Q-5.0 10 -16.0 22 M-12.0 2 Q-4.0 10 7.0 22 M9.0 2 Q1.0 10 -10.0 22 M-6.0 2 Q2.0 10 13.0 22 M15.0 2 Q7.0 10 -4.0 22 M0.0 2 Q8.0 10 19.0 22 M21.0 2 Q13.0 10 2.0 22 M6.0 2 Q14.0 10 25.0 22 M27.0 2 Q19.0 10 8.0 22 M12.0 2 Q20.0 10 31.0 22 M33.0 2 Q25.0 10 14.0 22 M18.0 2 Q26.0 10 37.0 22 M39.0 2 Q31.0 10 20.0 22 M24.0 2 Q32.0 10 43.0 22 M45.0 2 Q37.0 10 26.0 22 M30.0 2 Q38.0 10 49.0 22 M51.0 2 Q43.0 10 32.0 22 " stroke="#b0b0b0" style="clip-path:inset(16px 0 0 0)"/></g><path d="M1.8 9 C3 3, 7 1.5, 10 5.5 S15.5 9.5, 20 6.5" stroke="#7a7a7a" stroke-width="2" fill="none" stroke-linecap="round"/></svg>
<svg style="position:absolute;left:149px;top:62px;" width="21" height="21" viewBox="0 0 21 21"><defs><clipPath id="mc22"><path d="M2 10 Q2 4 10.5 4 Q19 4 19 10 L19.5 17 Q17 20.5 14 20.5 L7 20.5 Q3 20.5 1.5 17 Z"/></clipPath></defs><g clip-path="url(#mc22)" fill="none" stroke-width="1.0"><g clip-path="inset(0)"><path d="M-30.0 2 Q-22.0 10 -11.0 22 M-9.0 2 Q-17.0 10 -28.0 22 M-24.0 2 Q-16.0 10 -5.0 22 M-3.0 2 Q-11.0 10 -22.0 22 M-18.0 2 Q-10.0 10 1.0 22 M3.0 2 Q-5.0 10 -16.0 22 M-12.0 2 Q-4.0 10 7.0 22 M9.0 2 Q1.0 10 -10.0 22 M-6.0 2 Q2.0 10 13.0 22 M15.0 2 Q7.0 10 -4.0 22 M0.0 2 Q8.0 10 19.0 22 M21.0 2 Q13.0 10 2.0 22 M6.0 2 Q14.0 10 25.0 22 M27.0 2 Q19.0 10 8.0 22 M12.0 2 Q20.0 10 31.0 22 M33.0 2 Q25.0 10 14.0 22 M18.0 2 Q26.0 10 37.0 22 M39.0 2 Q31.0 10 20.0 22 M24.0 2 Q32.0 10 43.0 22 M45.0 2 Q37.0 10 26.0 22 M30.0 2 Q38.0 10 49.0 22 M51.0 2 Q43.0 10 32.0 22 " stroke="#b0b0b0" style="clip-path:inset(0 0 12px 0)"/></g><path d="M-30.0 2 Q-22.0 10 -11.0 22 M-9.0 2 Q-17.0 10 -28.0 22 M-24.0 2 Q-16.0 10 -5.0 22 M-3.0 2 Q-11.0 10 -22.0 22 M-18.0 2 Q-10.0 10 1.0 22 M3.0 2 Q-5.0 10 -16.0 22 M-12.0 2 Q-4.0 10 7.0 22 M9.0 2 Q1.0 10 -10.0 22 M-6.0 2 Q2.0 10 13.0 22 M15.0 2 Q7.0 10 -4.0 22 M0.0 2 Q8.0 10 19.0 22 M21.0 2 Q13.0 10 2.0 22 M6.0 2 Q14.0 10 25.0 22 M27.0 2 Q19.0 10 8.0 22 M12.0 2 Q20.0 10 31.0 22 M33.0 2 Q25.0 10 14.0 22 M18.0 2 Q26.0 10 37.0 22 M39.0 2 Q31.0 10 20.0 22 M24.0 2 Q32.0 10 43.0 22 M45.0 2 Q37.0 10 26.0 22 M30.0 2 Q38.0 10 49.0 22 M51.0 2 Q43.0 10 32.0 22 " stroke="#b0b0b0" style="clip-path:inset(9px 0 5px 0)"/><path d="M-30.0 2 Q-22.0 10 -11.0 22 M-9.0 2 Q-17.0 10 -28.0 22 M-24.0 2 Q-16.0 10 -5.0 22 M-3.0 2 Q-11.0 10 -22.0 22 M-18.0 2 Q-10.0 10 1.0 22 M3.0 2 Q-5.0 10 -16.0 22 M-12.0 2 Q-4.0 10 7.0 22 M9.0 2 Q1.0 10 -10.0 22 M-6.0 2 Q2.0 10 13.0 22 M15.0 2 Q7.0 10 -4.0 22 M0.0 2 Q8.0 10 19.0 22 M21.0 2 Q13.0 10 2.0 22 M6.0 2 Q14.0 10 25.0 22 M27.0 2 Q19.0 10 8.0 22 M12.0 2 Q20.0 10 31.0 22 M33.0 2 Q25.0 10 14.0 22 M18.0 2 Q26.0 10 37.0 22 M39.0 2 Q31.0 10 20.0 22 M24.0 2 Q32.0 10 43.0 22 M45.0 2 Q37.0 10 26.0 22 M30.0 2 Q38.0 10 49.0 22 M51.0 2 Q43.0 10 32.0 22 " stroke="#b0b0b0" style="clip-path:inset(16px 0 0 0)"/></g><path d="M1.8 9 C3 3, 7 1.5, 10 5.5 S15.5 9.5, 20 6.5" stroke="#8a8a8a" stroke-width="2" fill="none" stroke-linecap="round"/><path d="M1.5 11.5 L7 9.5 L12 11.5 L12 18 L6.5 20 L1.5 18 Z M1.5 11.5 L6.5 13.5 L12 11.5 M6.5 13.5 L6.5 20" stroke="#7a7a7a" stroke-width="1.1" fill="#e4e4e4" stroke-linejoin="round"/></svg>
<svg style="position:absolute;left:177px;top:62px;" width="21" height="21" viewBox="0 0 21 21"><defs><clipPath id="mc23"><path d="M2 10 Q2 4 10.5 4 Q19 4 19 10 L19.5 17 Q17 20.5 14 20.5 L7 20.5 Q3 20.5 1.5 17 Z"/></clipPath></defs><g clip-path="url(#mc23)" fill="none" stroke-width="1.0"><g clip-path="inset(0)"><path d="M-30.0 2 Q-22.0 10 -11.0 22 M-9.0 2 Q-17.0 10 -28.0 22 M-24.0 2 Q-16.0 10 -5.0 22 M-3.0 2 Q-11.0 10 -22.0 22 M-18.0 2 Q-10.0 10 1.0 22 M3.0 2 Q-5.0 10 -16.0 22 M-12.0 2 Q-4.0 10 7.0 22 M9.0 2 Q1.0 10 -10.0 22 M-6.0 2 Q2.0 10 13.0 22 M15.0 2 Q7.0 10 -4.0 22 M0.0 2 Q8.0 10 19.0 22 M21.0 2 Q13.0 10 2.0 22 M6.0 2 Q14.0 10 25.0 22 M27.0 2 Q19.0 10 8.0 22 M12.0 2 Q20.0 10 31.0 22 M33.0 2 Q25.0 10 14.0 22 M18.0 2 Q26.0 10 37.0 22 M39.0 2 Q31.0 10 20.0 22 M24.0 2 Q32.0 10 43.0 22 M45.0 2 Q37.0 10 26.0 22 M30.0 2 Q38.0 10 49.0 22 M51.0 2 Q43.0 10 32.0 22 " stroke="#b0b0b0" style="clip-path:inset(0 0 12px 0)"/></g><path d="M-30.0 2 Q-22.0 10 -11.0 22 M-9.0 2 Q-17.0 10 -28.0 22 M-24.0 2 Q-16.0 10 -5.0 22 M-3.0 2 Q-11.0 10 -22.0 22 M-18.0 2 Q-10.0 10 1.0 22 M3.0 2 Q-5.0 10 -16.0 22 M-12.0 2 Q-4.0 10 7.0 22 M9.0 2 Q1.0 10 -10.0 22 M-6.0 2 Q2.0 10 13.0 22 M15.0 2 Q7.0 10 -4.0 22 M0.0 2 Q8.0 10 19.0 22 M21.0 2 Q13.0 10 2.0 22 M6.0 2 Q14.0 10 25.0 22 M27.0 2 Q19.0 10 8.0 22 M12.0 2 Q20.0 10 31.0 22 M33.0 2 Q25.0 10 14.0 22 M18.0 2 Q26.0 10 37.0 22 M39.0 2 Q31.0 10 20.0 22 M24.0 2 Q32.0 10 43.0 22 M45.0 2 Q37.0 10 26.0 22 M30.0 2 Q38.0 10 49.0 22 M51.0 2 Q43.0 10 32.0 22 " stroke="#b0b0b0" style="clip-path:inset(9px 0 5px 0)"/><path d="M-30.0 2 Q-22.0 10 -11.0 22 M-9.0 2 Q-17.0 10 -28.0 22 M-24.0 2 Q-16.0 10 -5.0 22 M-3.0 2 Q-11.0 10 -22.0 22 M-18.0 2 Q-10.0 10 1.0 22 M3.0 2 Q-5.0 10 -16.0 22 M-12.0 2 Q-4.0 10 7.0 22 M9.0 2 Q1.0 10 -10.0 22 M-6.0 2 Q2.0 10 13.0 22 M15.0 2 Q7.0 10 -4.0 22 M0.0 2 Q8.0 10 19.0 22 M21.0 2 Q13.0 10 2.0 22 M6.0 2 Q14.0 10 25.0 22 M27.0 2 Q19.0 10 8.0 22 M12.0 2 Q20.0 10 31.0 22 M33.0 2 Q25.0 10 14.0 22 M18.0 2 Q26.0 10 37.0 22 M39.0 2 Q31.0 10 20.0 22 M24.0 2 Q32.0 10 43.0 22 M45.0 2 Q37.0 10 26.0 22 M30.0 2 Q38.0 10 49.0 22 M51.0 2 Q43.0 10 32.0 22 " stroke="#b0b0b0" style="clip-path:inset(16px 0 0 0)"/></g><path d="M1.8 9 C3 3, 7 1.5, 10 5.5 S15.5 9.5, 20 6.5" stroke="#8a8a8a" stroke-width="2" fill="none" stroke-linecap="round"/><path d="M1.5 11.5 L7 9.5 L12 11.5 L12 18 L6.5 20 L1.5 18 Z M1.5 11.5 L6.5 13.5 L12 11.5 M6.5 13.5 L6.5 20" stroke="#7a7a7a" stroke-width="1.1" fill="#e4e4e4" stroke-linejoin="round"/></svg>
<svg style="position:absolute;left:212px;top:62px;" width="21" height="21" viewBox="0 0 21 21"><defs><clipPath id="mc24"><path d="M2 10 Q2 4 10.5 4 Q19 4 19 10 L19.5 17 Q17 20.5 14 20.5 L7 20.5 Q3 20.5 1.5 17 Z"/></clipPath></defs><g clip-path="url(#mc24)" fill="none" stroke-width="1.0"><g clip-path="inset(0)"><path d="M-30.0 2 Q-22.0 10 -11.0 22 M-9.0 2 Q-17.0 10 -28.0 22 M-24.0 2 Q-16.0 10 -5.0 22 M-3.0 2 Q-11.0 10 -22.0 22 M-18.0 2 Q-10.0 10 1.0 22 M3.0 2 Q-5.0 10 -16.0 22 M-12.0 2 Q-4.0 10 7.0 22 M9.0 2 Q1.0 10 -10.0 22 M-6.0 2 Q2.0 10 13.0 22 M15.0 2 Q7.0 10 -4.0 22 M0.0 2 Q8.0 10 19.0 22 M21.0 2 Q13.0 10 2.0 22 M6.0 2 Q14.0 10 25.0 22 M27.0 2 Q19.0 10 8.0 22 M12.0 2 Q20.0 10 31.0 22 M33.0 2 Q25.0 10 14.0 22 M18.0 2 Q26.0 10 37.0 22 M39.0 2 Q31.0 10 20.0 22 M24.0 2 Q32.0 10 43.0 22 M45.0 2 Q37.0 10 26.0 22 M30.0 2 Q38.0 10 49.0 22 M51.0 2 Q43.0 10 32.0 22 " stroke="#b0b0b0" style="clip-path:inset(0 0 12px 0)"/></g><path d="M-30.0 2 Q-22.0 10 -11.0 22 M-9.0 2 Q-17.0 10 -28.0 22 M-24.0 2 Q-16.0 10 -5.0 22 M-3.0 2 Q-11.0 10 -22.0 22 M-18.0 2 Q-10.0 10 1.0 22 M3.0 2 Q-5.0 10 -16.0 22 M-12.0 2 Q-4.0 10 7.0 22 M9.0 2 Q1.0 10 -10.0 22 M-6.0 2 Q2.0 10 13.0 22 M15.0 2 Q7.0 10 -4.0 22 M0.0 2 Q8.0 10 19.0 22 M21.0 2 Q13.0 10 2.0 22 M6.0 2 Q14.0 10 25.0 22 M27.0 2 Q19.0 10 8.0 22 M12.0 2 Q20.0 10 31.0 22 M33.0 2 Q25.0 10 14.0 22 M18.0 2 Q26.0 10 37.0 22 M39.0 2 Q31.0 10 20.0 22 M24.0 2 Q32.0 10 43.0 22 M45.0 2 Q37.0 10 26.0 22 M30.0 2 Q38.0 10 49.0 22 M51.0 2 Q43.0 10 32.0 22 " stroke="#b0b0b0" style="clip-path:inset(9px 0 5px 0)"/><path d="M-30.0 2 Q-22.0 10 -11.0 22 M-9.0 2 Q-17.0 10 -28.0 22 M-24.0 2 Q-16.0 10 -5.0 22 M-3.0 2 Q-11.0 10 -22.0 22 M-18.0 2 Q-10.0 10 1.0 22 M3.0 2 Q-5.0 10 -16.0 22 M-12.0 2 Q-4.0 10 7.0 22 M9.0 2 Q1.0 10 -10.0 22 M-6.0 2 Q2.0 10 13.0 22 M15.0 2 Q7.0 10 -4.0 22 M0.0 2 Q8.0 10 19.0 22 M21.0 2 Q13.0 10 2.0 22 M6.0 2 Q14.0 10 25.0 22 M27.0 2 Q19.0 10 8.0 22 M12.0 2 Q20.0 10 31.0 22 M33.0 2 Q25.0 10 14.0 22 M18.0 2 Q26.0 10 37.0 22 M39.0 2 Q31.0 10 20.0 22 M24.0 2 Q32.0 10 43.0 22 M45.0 2 Q37.0 10 26.0 22 M30.0 2 Q38.0 10 49.0 22 M51.0 2 Q43.0 10 32.0 22 " stroke="#b0b0b0" style="clip-path:inset(16px 0 0 0)"/></g><path d="M1.8 9 C3 3, 7 1.5, 10 5.5 S15.5 9.5, 20 6.5" stroke="#8a8a8a" stroke-width="2" fill="none" stroke-linecap="round"/><path d="M1.5 11.5 L7 9.5 L12 11.5 L12 18 L6.5 20 L1.5 18 Z M1.5 11.5 L6.5 13.5 L12 11.5 M6.5 13.5 L6.5 20" stroke="#7a7a7a" stroke-width="1.1" fill="#e4e4e4" stroke-linejoin="round"/></svg>
<svg style="position:absolute;left:255px;top:62px;" width="21" height="21" viewBox="0 0 21 21"><defs><clipPath id="mc25"><path d="M2 10 Q2 4 10.5 4 Q19 4 19 10 L19.5 17 Q17 20.5 14 20.5 L7 20.5 Q3 20.5 1.5 17 Z"/></clipPath></defs><g clip-path="url(#mc25)" fill="none" stroke-width="1.0"><g clip-path="inset(0)"><path d="M-30.0 2 Q-22.0 10 -11.0 22 M-9.0 2 Q-17.0 10 -28.0 22 M-24.0 2 Q-16.0 10 -5.0 22 M-3.0 2 Q-11.0 10 -22.0 22 M-18.0 2 Q-10.0 10 1.0 22 M3.0 2 Q-5.0 10 -16.0 22 M-12.0 2 Q-4.0 10 7.0 22 M9.0 2 Q1.0 10 -10.0 22 M-6.0 2 Q2.0 10 13.0 22 M15.0 2 Q7.0 10 -4.0 22 M0.0 2 Q8.0 10 19.0 22 M21.0 2 Q13.0 10 2.0 22 M6.0 2 Q14.0 10 25.0 22 M27.0 2 Q19.0 10 8.0 22 M12.0 2 Q20.0 10 31.0 22 M33.0 2 Q25.0 10 14.0 22 M18.0 2 Q26.0 10 37.0 22 M39.0 2 Q31.0 10 20.0 22 M24.0 2 Q32.0 10 43.0 22 M45.0 2 Q37.0 10 26.0 22 M30.0 2 Q38.0 10 49.0 22 M51.0 2 Q43.0 10 32.0 22 " stroke="#b0b0b0" style="clip-path:inset(0 0 12px 0)"/></g><path d="M-30.0 2 Q-22.0 10 -11.0 22 M-9.0 2 Q-17.0 10 -28.0 22 M-24.0 2 Q-16.0 10 -5.0 22 M-3.0 2 Q-11.0 10 -22.0 22 M-18.0 2 Q-10.0 10 1.0 22 M3.0 2 Q-5.0 10 -16.0 22 M-12.0 2 Q-4.0 10 7.0 22 M9.0 2 Q1.0 10 -10.0 22 M-6.0 2 Q2.0 10 13.0 22 M15.0 2 Q7.0 10 -4.0 22 M0.0 2 Q8.0 10 19.0 22 M21.0 2 Q13.0 10 2.0 22 M6.0 2 Q14.0 10 25.0 22 M27.0 2 Q19.0 10 8.0 22 M12.0 2 Q20.0 10 31.0 22 M33.0 2 Q25.0 10 14.0 22 M18.0 2 Q26.0 10 37.0 22 M39.0 2 Q31.0 10 20.0 22 M24.0 2 Q32.0 10 43.0 22 M45.0 2 Q37.0 10 26.0 22 M30.0 2 Q38.0 10 49.0 22 M51.0 2 Q43.0 10 32.0 22 " stroke="#b0b0b0" style="clip-path:inset(9px 0 5px 0)"/><path d="M-30.0 2 Q-22.0 10 -11.0 22 M-9.0 2 Q-17.0 10 -28.0 22 M-24.0 2 Q-16.0 10 -5.0 22 M-3.0 2 Q-11.0 10 -22.0 22 M-18.0 2 Q-10.0 10 1.0 22 M3.0 2 Q-5.0 10 -16.0 22 M-12.0 2 Q-4.0 10 7.0 22 M9.0 2 Q1.0 10 -10.0 22 M-6.0 2 Q2.0 10 13.0 22 M15.0 2 Q7.0 10 -4.0 22 M0.0 2 Q8.0 10 19.0 22 M21.0 2 Q13.0 10 2.0 22 M6.0 2 Q14.0 10 25.0 22 M27.0 2 Q19.0 10 8.0 22 M12.0 2 Q20.0 10 31.0 22 M33.0 2 Q25.0 10 14.0 22 M18.0 2 Q26.0 10 37.0 22 M39.0 2 Q31.0 10 20.0 22 M24.0 2 Q32.0 10 43.0 22 M45.0 2 Q37.0 10 26.0 22 M30.0 2 Q38.0 10 49.0 22 M51.0 2 Q43.0 10 32.0 22 " stroke="#b0b0b0" style="clip-path:inset(16px 0 0 0)"/></g><path d="M1.8 9 C3 3, 7 1.5, 10 5.5 S15.5 9.5, 20 6.5" stroke="#8a8a8a" stroke-width="2" fill="none" stroke-linecap="round"/><path d="M1.5 11.5 L7 9.5 L12 11.5 L12 18 L6.5 20 L1.5 18 Z M1.5 11.5 L6.5 13.5 L12 11.5 M6.5 13.5 L6.5 20" stroke="#7a7a7a" stroke-width="1.1" fill="#e4e4e4" stroke-linejoin="round"/></svg>
<svg style="position:absolute;left:297px;top:62px;" width="21" height="21" viewBox="0 0 21 21"><text x="10.3" y="11.6" font-family="Liberation Sans" font-weight="bold" font-size="14.5" fill="#a4a4a4" stroke="#a4a4a4" stroke-width="0.9" text-anchor="middle">S</text><text x="10.3" y="18.7" font-family="Liberation Sans" font-weight="bold" font-size="7.6" fill="#6a6a6a" text-anchor="middle" transform="translate(10.3 0) scale(1.15 1) translate(-10.3 0)">AVR</text></svg>
<svg style="position:absolute;left:333px;top:62px;" width="21" height="21" viewBox="0 0 21 21"><rect x="1" y="1" width="19" height="18" fill="#fffbe0"/><g stroke="#d8d8d8" stroke-width="1"><path d="M1.0 1 V19"/><path d="M5.8 1 V19"/><path d="M10.5 1 V19"/><path d="M15.2 1 V19"/><path d="M20.0 1 V19"/><path d="M1 1.0 H20"/><path d="M1 5.5 H20"/><path d="M1 10.0 H20"/><path d="M1 14.5 H20"/><path d="M1 19.0 H20"/></g><path d="M10.5 1 V10 H20 M15 1 V10 M10.5 5.5 H20" stroke="#202020" stroke-width="1" fill="none"/><path d="M1 1 H20 V19" stroke="#f0e040" stroke-width="1.5" fill="none"/></svg>
<svg style="position:absolute;left:373px;top:62px;" width="21" height="21" viewBox="0 0 21 21"><path d="M1 18.5 H5 V2.5 H15 V18.5 H19" stroke="#1030b0" stroke-width="2.2" fill="none"/><path d="M10 8 L6.5 12 H8.5 V18 H11.5 V12 H13.5 Z" fill="#1850e0"/><path d="M3 20 H17" stroke="#c0c8e0" stroke-width="1"/></svg>
<svg style="position:absolute;left:415px;top:62px;" width="21" height="21" viewBox="0 0 21 21"><path d="M1 18 H5 V8 H15 V18 H19" stroke="#1030b0" stroke-width="2.2" fill="none"/><path d="M3 20 H17" stroke="#c0c8e0" stroke-width="1"/></svg>
<svg style="position:absolute;left:464px;top:62px;" width="21" height="21" viewBox="0 0 21 21"><path d="M1 17 H6 V13 H14 V17 H19" stroke="#1030b0" stroke-width="2.2" fill="none"/><path d="M10 11 L6.5 6.5 H8.5 V1 H11.5 V6.5 H13.5 Z" fill="#1850e0"/><path d="M3 19.5 H17" stroke="#c0c8e0" stroke-width="1"/></svg>
<svg style="position:absolute;left:527px;top:62px;" width="21" height="21" viewBox="0 0 21 21"><defs><clipPath id="mc26"><path d="M2 10 Q2 4 10.5 4 Q19 4 19 10 L19.5 17 Q17 20.5 14 20.5 L7 20.5 Q3 20.5 1.5 17 Z"/></clipPath></defs><g clip-path="url(#mc26)" fill="none" stroke-width="1.5"><g clip-path="inset(0)"><path d="M-30.0 2 Q-22.0 10 -11.0 22 M-9.0 2 Q-17.0 10 -28.0 22 M-24.0 2 Q-16.0 10 -5.0 22 M-3.0 2 Q-11.0 10 -22.0 22 M-18.0 2 Q-10.0 10 1.0 22 M3.0 2 Q-5.0 10 -16.0 22 M-12.0 2 Q-4.0 10 7.0 22 M9.0 2 Q1.0 10 -10.0 22 M-6.0 2 Q2.0 10 13.0 22 M15.0 2 Q7.0 10 -4.0 22 M0.0 2 Q8.0 10 19.0 22 M21.0 2 Q13.0 10 2.0 22 M6.0 2 Q14.0 10 25.0 22 M27.0 2 Q19.0 10 8.0 22 M12.0 2 Q20.0 10 31.0 22 M33.0 2 Q25.0 10 14.0 22 M18.0 2 Q26.0 10 37.0 22 M39.0 2 Q31.0 10 20.0 22 M24.0 2 Q32.0 10 43.0 22 M45.0 2 Q37.0 10 26.0 22 M30.0 2 Q38.0 10 49.0 22 M51.0 2 Q43.0 10 32.0 22 " stroke="#e83a28" style="clip-path:inset(0 0 12px 0)"/></g><path d="M-30.0 2 Q-22.0 10 -11.0 22 M-9.0 2 Q-17.0 10 -28.0 22 M-24.0 2 Q-16.0 10 -5.0 22 M-3.0 2 Q-11.0 10 -22.0 22 M-18.0 2 Q-10.0 10 1.0 22 M3.0 2 Q-5.0 10 -16.0 22 M-12.0 2 Q-4.0 10 7.0 22 M9.0 2 Q1.0 10 -10.0 22 M-6.0 2 Q2.0 10 13.0 22 M15.0 2 Q7.0 10 -4.0 22 M0.0 2 Q8.0 10 19.0 22 M21.0 2 Q13.0 10 2.0 22 M6.0 2 Q14.0 10 25.0 22 M27.0 2 Q19.0 10 8.0 22 M12.0 2 Q20.0 10 31.0 22 M33.0 2 Q25.0 10 14.0 22 M18.0 2 Q26.0 10 37.0 22 M39.0 2 Q31.0 10 20.0 22 M24.0 2 Q32.0 10 43.0 22 M45.0 2 Q37.0 10 26.0 22 M30.0 2 Q38.0 10 49.0 22 M51.0 2 Q43.0 10 32.0 22 " stroke="#22c838" style="clip-path:inset(9px 0 5px 0)"/><path d="M-30.0 2 Q-22.0 10 -11.0 22 M-9.0 2 Q-17.0 10 -28.0 22 M-24.0 2 Q-16.0 10 -5.0 22 M-3.0 2 Q-11.0 10 -22.0 22 M-18.0 2 Q-10.0 10 1.0 22 M3.0 2 Q-5.0 10 -16.0 22 M-12.0 2 Q-4.0 10 7.0 22 M9.0 2 Q1.0 10 -10.0 22 M-6.0 2 Q2.0 10 13.0 22 M15.0 2 Q7.0 10 -4.0 22 M0.0 2 Q8.0 10 19.0 22 M21.0 2 Q13.0 10 2.0 22 M6.0 2 Q14.0 10 25.0 22 M27.0 2 Q19.0 10 8.0 22 M12.0 2 Q20.0 10 31.0 22 M33.0 2 Q25.0 10 14.0 22 M18.0 2 Q26.0 10 37.0 22 M39.0 2 Q31.0 10 20.0 22 M24.0 2 Q32.0 10 43.0 22 M45.0 2 Q37.0 10 26.0 22 M30.0 2 Q38.0 10 49.0 22 M51.0 2 Q43.0 10 32.0 22 " stroke="#2a4ae8" style="clip-path:inset(16px 0 0 0)"/></g><path d="M1.8 9 C3 3, 7 1.5, 10 5.5 S15.5 9.5, 20 6.5" stroke="#1030b0" stroke-width="2" fill="none" stroke-linecap="round"/><path d="M8 6 Q15 3 17 9 L19.5 9 L15.5 15 L11 9 L13.5 9 Q12.5 7 8 7.5 Z" fill="#f8c020" stroke="#d09000" stroke-width="0.6"/></svg>
<svg style="position:absolute;left:582px;top:62px;" width="21" height="21" viewBox="0 0 21 21"><defs><clipPath id="mc27"><path d="M2 10 Q2 4 10.5 4 Q19 4 19 10 L19.5 17 Q17 20.5 14 20.5 L7 20.5 Q3 20.5 1.5 17 Z"/></clipPath></defs><g clip-path="url(#mc27)" fill="none" stroke-width="1.5"><g clip-path="inset(0)"><path d="M-30.0 2 Q-22.0 10 -11.0 22 M-9.0 2 Q-17.0 10 -28.0 22 M-24.0 2 Q-16.0 10 -5.0 22 M-3.0 2 Q-11.0 10 -22.0 22 M-18.0 2 Q-10.0 10 1.0 22 M3.0 2 Q-5.0 10 -16.0 22 M-12.0 2 Q-4.0 10 7.0 22 M9.0 2 Q1.0 10 -10.0 22 M-6.0 2 Q2.0 10 13.0 22 M15.0 2 Q7.0 10 -4.0 22 M0.0 2 Q8.0 10 19.0 22 M21.0 2 Q13.0 10 2.0 22 M6.0 2 Q14.0 10 25.0 22 M27.0 2 Q19.0 10 8.0 22 M12.0 2 Q20.0 10 31.0 22 M33.0 2 Q25.0 10 14.0 22 M18.0 2 Q26.0 10 37.0 22 M39.0 2 Q31.0 10 20.0 22 M24.0 2 Q32.0 10 43.0 22 M45.0 2 Q37.0 10 26.0 22 M30.0 2 Q38.0 10 49.0 22 M51.0 2 Q43.0 10 32.0 22 " stroke="#e83a28" style="clip-path:inset(0 0 12px 0)"/></g><path d="M-30.0 2 Q-22.0 10 -11.0 22 M-9.0 2 Q-17.0 10 -28.0 22 M-24.0 2 Q-16.0 10 -5.0 22 M-3.0 2 Q-11.0 10 -22.0 22 M-18.0 2 Q-10.0 10 1.0 22 M3.0 2 Q-5.0 10 -16.0 22 M-12.0 2 Q-4.0 10 7.0 22 M9.0 2 Q1.0 10 -10.0 22 M-6.0 2 Q2.0 10 13.0 22 M15.0 2 Q7.0 10 -4.0 22 M0.0 2 Q8.0 10 19.0 22 M21.0 2 Q13.0 10 2.0 22 M6.0 2 Q14.0 10 25.0 22 M27.0 2 Q19.0 10 8.0 22 M12.0 2 Q20.0 10 31.0 22 M33.0 2 Q25.0 10 14.0 22 M18.0 2 Q26.0 10 37.0 22 M39.0 2 Q31.0 10 20.0 22 M24.0 2 Q32.0 10 43.0 22 M45.0 2 Q37.0 10 26.0 22 M30.0 2 Q38.0 10 49.0 22 M51.0 2 Q43.0 10 32.0 22 " stroke="#22c838" style="clip-path:inset(9px 0 5px 0)"/><path d="M-30.0 2 Q-22.0 10 -11.0 22 M-9.0 2 Q-17.0 10 -28.0 22 M-24.0 2 Q-16.0 10 -5.0 22 M-3.0 2 Q-11.0 10 -22.0 22 M-18.0 2 Q-10.0 10 1.0 22 M3.0 2 Q-5.0 10 -16.0 22 M-12.0 2 Q-4.0 10 7.0 22 M9.0 2 Q1.0 10 -10.0 22 M-6.0 2 Q2.0 10 13.0 22 M15.0 2 Q7.0 10 -4.0 22 M0.0 2 Q8.0 10 19.0 22 M21.0 2 Q13.0 10 2.0 22 M6.0 2 Q14.0 10 25.0 22 M27.0 2 Q19.0 10 8.0 22 M12.0 2 Q20.0 10 31.0 22 M33.0 2 Q25.0 10 14.0 22 M18.0 2 Q26.0 10 37.0 22 M39.0 2 Q31.0 10 20.0 22 M24.0 2 Q32.0 10 43.0 22 M45.0 2 Q37.0 10 26.0 22 M30.0 2 Q38.0 10 49.0 22 M51.0 2 Q43.0 10 32.0 22 " stroke="#2a4ae8" style="clip-path:inset(16px 0 0 0)"/></g><path d="M1.8 9 C3 3, 7 1.5, 10 5.5 S15.5 9.5, 20 6.5" stroke="#1030b0" stroke-width="2" fill="none" stroke-linecap="round"/><path d="M1.5 11.5 L7 9.5 L12 11.5 L12 18 L6.5 20 L1.5 18 Z M1.5 11.5 L6.5 13.5 L12 11.5 M6.5 13.5 L6.5 20" stroke="#202040" stroke-width="1.1" fill="#6a8aa0" stroke-linejoin="round"/><path d="M8 6 Q15 3 17 9 L19.5 9 L15.5 15 L11 9 L13.5 9 Q12.5 7 8 7.5 Z" fill="#f8c020" stroke="#d09000" stroke-width="0.6"/></svg>
<svg style="position:absolute;left:733px;top:62px;" width="21" height="21" viewBox="0 0 21 21"><circle cx="10.5" cy="10.5" r="9.5" fill="#2050d0"/><circle cx="10.5" cy="9.5" r="8" fill="#30b040"/><path d="M3 6 Q10 1 18 6 L17 12 Q10 8 3 12 Z" fill="#e03020"/><path d="M4 8 L17 8 M5 5 L9 13 M11 3 L14 12" stroke="#f09070" stroke-width="1"/><path d="M2 11 H11 V8 L18 13 L11 18 V15 H2 Z" fill="#a0f020" stroke="#60b010" stroke-width="0.6"/></svg>
<svg style="position:absolute;left:782px;top:62px;" width="21" height="21" viewBox="0 0 21 21"><defs><clipPath id="mc28"><path d="M2 10 Q2 4 10.5 4 Q19 4 19 10 L19.5 17 Q17 20.5 14 20.5 L7 20.5 Q3 20.5 1.5 17 Z"/></clipPath></defs><g clip-path="url(#mc28)" fill="none" stroke-width="1.5"><g clip-path="inset(0)"><path d="M-30.0 2 Q-22.0 10 -11.0 22 M-9.0 2 Q-17.0 10 -28.0 22 M-24.0 2 Q-16.0 10 -5.0 22 M-3.0 2 Q-11.0 10 -22.0 22 M-18.0 2 Q-10.0 10 1.0 22 M3.0 2 Q-5.0 10 -16.0 22 M-12.0 2 Q-4.0 10 7.0 22 M9.0 2 Q1.0 10 -10.0 22 M-6.0 2 Q2.0 10 13.0 22 M15.0 2 Q7.0 10 -4.0 22 M0.0 2 Q8.0 10 19.0 22 M21.0 2 Q13.0 10 2.0 22 M6.0 2 Q14.0 10 25.0 22 M27.0 2 Q19.0 10 8.0 22 M12.0 2 Q20.0 10 31.0 22 M33.0 2 Q25.0 10 14.0 22 M18.0 2 Q26.0 10 37.0 22 M39.0 2 Q31.0 10 20.0 22 M24.0 2 Q32.0 10 43.0 22 M45.0 2 Q37.0 10 26.0 22 M30.0 2 Q38.0 10 49.0 22 M51.0 2 Q43.0 10 32.0 22 " stroke="#e83a28" style="clip-path:inset(0 0 12px 0)"/></g><path d="M-30.0 2 Q-22.0 10 -11.0 22 M-9.0 2 Q-17.0 10 -28.0 22 M-24.0 2 Q-16.0 10 -5.0 22 M-3.0 2 Q-11.0 10 -22.0 22 M-18.0 2 Q-10.0 10 1.0 22 M3.0 2 Q-5.0 10 -16.0 22 M-12.0 2 Q-4.0 10 7.0 22 M9.0 2 Q1.0 10 -10.0 22 M-6.0 2 Q2.0 10 13.0 22 M15.0 2 Q7.0 10 -4.0 22 M0.0 2 Q8.0 10 19.0 22 M21.0 2 Q13.0 10 2.0 22 M6.0 2 Q14.0 10 25.0 22 M27.0 2 Q19.0 10 8.0 22 M12.0 2 Q20.0 10 31.0 22 M33.0 2 Q25.0 10 14.0 22 M18.0 2 Q26.0 10 37.0 22 M39.0 2 Q31.0 10 20.0 22 M24.0 2 Q32.0 10 43.0 22 M45.0 2 Q37.0 10 26.0 22 M30.0 2 Q38.0 10 49.0 22 M51.0 2 Q43.0 10 32.0 22 " stroke="#22c838" style="clip-path:inset(9px 0 5px 0)"/><path d="M-30.0 2 Q-22.0 10 -11.0 22 M-9.0 2 Q-17.0 10 -28.0 22 M-24.0 2 Q-16.0 10 -5.0 22 M-3.0 2 Q-11.0 10 -22.0 22 M-18.0 2 Q-10.0 10 1.0 22 M3.0 2 Q-5.0 10 -16.0 22 M-12.0 2 Q-4.0 10 7.0 22 M9.0 2 Q1.0 10 -10.0 22 M-6.0 2 Q2.0 10 13.0 22 M15.0 2 Q7.0 10 -4.0 22 M0.0 2 Q8.0 10 19.0 22 M21.0 2 Q13.0 10 2.0 22 M6.0 2 Q14.0 10 25.0 22 M27.0 2 Q19.0 10 8.0 22 M12.0 2 Q20.0 10 31.0 22 M33.0 2 Q25.0 10 14.0 22 M18.0 2 Q26.0 10 37.0 22 M39.0 2 Q31.0 10 20.0 22 M24.0 2 Q32.0 10 43.0 22 M45.0 2 Q37.0 10 26.0 22 M30.0 2 Q38.0 10 49.0 22 M51.0 2 Q43.0 10 32.0 22 " stroke="#2a4ae8" style="clip-path:inset(16px 0 0 0)"/></g><path d="M4 12 L12 3 L19 3 L12 12 Z" fill="#b89868" stroke="#6a5030" stroke-width="0.8"/><path d="M2 12 H11 V9 L18 14 L11 19 V16 H2 Z" fill="#a0f020" stroke="#60b010" stroke-width="0.6"/></svg>
<svg style="position:absolute;left:833px;top:62px;" width="21" height="21" viewBox="0 0 21 21"><rect x="1.5" y="1.5" width="18" height="17" rx="1" fill="#f4f4f4" stroke="#b0b0b0"/><rect x="1.5" y="1.5" width="18" height="7" fill="#c8c8d8"/><rect x="2.5" y="2.5" width="3" height="2" fill="#6020a0"/><rect x="6.8" y="2.5" width="3" height="2" fill="#2030c0"/><rect x="11.1" y="2.5" width="3" height="2" fill="#a040c0"/><rect x="15.4" y="2.5" width="3" height="2" fill="#e0e0ff"/><rect x="2.5" y="5.5" width="3" height="2" fill="#202060"/><rect x="6.8" y="5.5" width="3" height="2" fill="#3050d0"/><rect x="11.1" y="5.5" width="3" height="2" fill="#8070e0"/><rect x="15.4" y="5.5" width="3" height="2" fill="#4040a0"/><path d="M2 19.5 H19" stroke="#d0d0d0"/></svg>
<svg style="position:absolute;left:878px;top:62px;" width="21" height="21" viewBox="0 0 21 21"><defs><clipPath id="mc29"><path d="M2 10 Q2 4 10.5 4 Q19 4 19 10 L19.5 17 Q17 20.5 14 20.5 L7 20.5 Q3 20.5 1.5 17 Z"/></clipPath></defs><g clip-path="url(#mc29)" fill="none" stroke-width="1.5"><g clip-path="inset(0)"><path d="M-30.0 2 Q-22.0 10 -11.0 22 M-9.0 2 Q-17.0 10 -28.0 22 M-24.0 2 Q-16.0 10 -5.0 22 M-3.0 2 Q-11.0 10 -22.0 22 M-18.0 2 Q-10.0 10 1.0 22 M3.0 2 Q-5.0 10 -16.0 22 M-12.0 2 Q-4.0 10 7.0 22 M9.0 2 Q1.0 10 -10.0 22 M-6.0 2 Q2.0 10 13.0 22 M15.0 2 Q7.0 10 -4.0 22 M0.0 2 Q8.0 10 19.0 22 M21.0 2 Q13.0 10 2.0 22 M6.0 2 Q14.0 10 25.0 22 M27.0 2 Q19.0 10 8.0 22 M12.0 2 Q20.0 10 31.0 22 M33.0 2 Q25.0 10 14.0 22 M18.0 2 Q26.0 10 37.0 22 M39.0 2 Q31.0 10 20.0 22 M24.0 2 Q32.0 10 43.0 22 M45.0 2 Q37.0 10 26.0 22 M30.0 2 Q38.0 10 49.0 22 M51.0 2 Q43.0 10 32.0 22 " stroke="#e83a28" style="clip-path:inset(0 0 12px 0)"/></g><path d="M-30.0 2 Q-22.0 10 -11.0 22 M-9.0 2 Q-17.0 10 -28.0 22 M-24.0 2 Q-16.0 10 -5.0 22 M-3.0 2 Q-11.0 10 -22.0 22 M-18.0 2 Q-10.0 10 1.0 22 M3.0 2 Q-5.0 10 -16.0 22 M-12.0 2 Q-4.0 10 7.0 22 M9.0 2 Q1.0 10 -10.0 22 M-6.0 2 Q2.0 10 13.0 22 M15.0 2 Q7.0 10 -4.0 22 M0.0 2 Q8.0 10 19.0 22 M21.0 2 Q13.0 10 2.0 22 M6.0 2 Q14.0 10 25.0 22 M27.0 2 Q19.0 10 8.0 22 M12.0 2 Q20.0 10 31.0 22 M33.0 2 Q25.0 10 14.0 22 M18.0 2 Q26.0 10 37.0 22 M39.0 2 Q31.0 10 20.0 22 M24.0 2 Q32.0 10 43.0 22 M45.0 2 Q37.0 10 26.0 22 M30.0 2 Q38.0 10 49.0 22 M51.0 2 Q43.0 10 32.0 22 " stroke="#22c838" style="clip-path:inset(9px 0 5px 0)"/><path d="M-30.0 2 Q-22.0 10 -11.0 22 M-9.0 2 Q-17.0 10 -28.0 22 M-24.0 2 Q-16.0 10 -5.0 22 M-3.0 2 Q-11.0 10 -22.0 22 M-18.0 2 Q-10.0 10 1.0 22 M3.0 2 Q-5.0 10 -16.0 22 M-12.0 2 Q-4.0 10 7.0 22 M9.0 2 Q1.0 10 -10.0 22 M-6.0 2 Q2.0 10 13.0 22 M15.0 2 Q7.0 10 -4.0 22 M0.0 2 Q8.0 10 19.0 22 M21.0 2 Q13.0 10 2.0 22 M6.0 2 Q14.0 10 25.0 22 M27.0 2 Q19.0 10 8.0 22 M12.0 2 Q20.0 10 31.0 22 M33.0 2 Q25.0 10 14.0 22 M18.0 2 Q26.0 10 37.0 22 M39.0 2 Q31.0 10 20.0 22 M24.0 2 Q32.0 10 43.0 22 M45.0 2 Q37.0 10 26.0 22 M30.0 2 Q38.0 10 49.0 22 M51.0 2 Q43.0 10 32.0 22 " stroke="#2a4ae8" style="clip-path:inset(16px 0 0 0)"/></g><path d="M1.8 9 C3 3, 7 1.5, 10 5.5 S15.5 9.5, 20 6.5" stroke="#1030b0" stroke-width="2" fill="none" stroke-linecap="round"/><text x="14" y="17" font-family="Liberation Sans" font-weight="bold" font-size="18" fill="#f8e020" stroke="#c0a000" stroke-width="0.6" text-anchor="middle">?</text></svg>
<div style="position:absolute;left:11.5px;top:105px;font-size:11px;line-height:11px;white-space:pre;transform-origin:0 0;transform:rotate(-90deg);color:#000">Ribbon</div>
<svg style="position:absolute;left:7px;top:110px" width="899" height="439" viewBox="7 110 899 439"><rect x="7" y="110" width="899" height="439" fill="#fff"/><path d="M177.3 110.0 L146.8 549.0 M178.3 110.0 L147.8 549.0 M180.1 110.0 L149.6 549.0 M181.3 110.0 L150.8 549.0 M185.3 110.0 L154.8 549.0 M187.4 110.0 L156.9 549.0 M193.3 110.0 L162.8 549.0 M196.4 110.0 L165.9 549.0 M203.9 110.0 L173.4 549.0 M207.2 110.0 L176.7 549.0 M217.0 110.0 L186.5 549.0 M221.0 110.0 L190.5 549.0 M232.8 110.0 L202.3 549.0 M237.4 110.0 L206.9 549.0 M251.2 110.0 L220.7 549.0 M256.5 110.0 L226.0 549.0 M271.5 110.0 L241.0 549.0 M276.8 110.0 L246.3 549.0 M293.0 110.0 L262.5 549.0 M299.0 110.0 L268.5 549.0 M317.5 110.0 L287.0 549.0 M323.6 110.0 L293.1 549.0 M342.0 110.0 L311.5 549.0 M349.0 110.0 L318.5 549.0 M368.9 110.0 L338.4 549.0 M376.0 110.0 L345.5 549.0 M395.8 110.0 L365.3 549.0 M404.6 110.0 L374.1 549.0 M424.3 110.0 L393.8 549.0 M432.5 110.0 L402.0 549.0 M452.8 110.0 L422.3 549.0 M461.0 110.0 L430.5 549.0 M484.7 110.0 L454.2 549.0 M490.5 110.0 L460.0 549.0 M511.0 110.0 L480.5 549.0 M519.0 110.0 L488.5 549.0 M539.5 110.0 L509.0 549.0 M547.0 110.0 L516.5 549.0 M566.9 110.0 L536.4 549.0 M574.5 110.0 L544.0 549.0 M593.7 110.0 L563.2 549.0 M601.4 110.0 L570.9 549.0 M619.8 110.0 L589.3 549.0 M626.0 110.0 L595.5 549.0 M643.9 110.0 L613.4 549.0 M650.5 110.0 L620.0 549.0 M666.1 110.0 L635.6 549.0 M672.7 110.0 L642.2 549.0 M687.0 110.0 L656.5 549.0 M692.3 110.0 L661.8 549.0 M705.8 110.0 L675.3 549.0 M710.7 110.0 L680.2 549.0 M722.2 110.0 L691.7 549.0 M726.8 110.0 L696.3 549.0 M736.0 110.0 L705.5 549.0 M740.1 110.0 L709.6 549.0 M747.5 110.0 L717.0 549.0 M750.9 110.0 L720.4 549.0 M756.7 110.0 L726.2 549.0 M759.8 110.0 L729.3 549.0 M762.8 110.0 L732.3 549.0 M765.9 110.0 L735.4 549.0 " stroke="#0000b0" stroke-width="1" fill="none" shape-rendering="crispEdges"/><polygon points="47,216 657,166 844,452 233,502" fill="#000080" shape-rendering="crispEdges"/><path d="M181.3 110.0 L167.9 303.0 M187.4 110.0 L175.1 287.5 M196.4 110.0 L185.0 274.5 M207.2 110.0 L196.5 263.5 M221.0 110.0 L211.1 253.0 M237.4 110.0 L228.2 243.0 M256.5 110.0 L247.9 234.0 M276.8 110.0 L268.7 226.0 M299.0 110.0 L291.4 219.5 M323.6 110.0 L316.4 214.0 M349.0 110.0 L342.1 210.0 M376.0 110.0 L369.3 206.5 M404.6 110.0 L398.0 205.0 M432.5 110.0 L425.9 204.5 M461.0 110.0 L454.4 205.0 M490.5 110.0 L483.7 207.5 M519.0 110.0 L512.0 210.5 M547.0 110.0 L539.7 215.0 M574.5 110.0 L566.8 220.5 M601.4 110.0 L593.2 227.5 M626.0 110.0 L617.3 235.0 M650.5 110.0 L641.2 244.5 M672.7 110.0 L662.7 254.0 M692.3 110.0 L681.6 264.0 M710.7 110.0 L699.2 275.5 M726.8 110.0 L714.5 287.5 M740.1 110.0 L726.9 299.5 M750.9 110.0 L736.9 312.0 M759.8 110.0 L744.8 326.0 M765.9 110.0 L749.9 341.0 " stroke="#0000b0" stroke-width="1" fill="none" shape-rendering="crispEdges"/><path d="M391.4 110.0 L375.4 340.0 M401.3 110.0 L385.3 340.0 M407.3 110.0 L391.3 340.0 M413.9 110.0 L397.9 340.0 M420.0 110.0 L404.0 340.0 M428.0 110.0 L412.0 340.0 M434.7 110.0 L418.7 340.0 M443.0 110.0 L427.0 340.0 M451.0 110.0 L435.0 340.0 M459.3 110.0 L443.3 340.0 M468.3 110.0 L452.3 340.0 M477.0 110.0 L461.0 340.0 M486.4 110.0 L470.4 340.0 M494.6 110.0 L478.6 340.0 M502.8 110.0 L486.8 340.0 M510.0 110.0 L494.0 340.0 M518.7 110.0 L502.7 340.0 M525.8 110.0 L509.8 340.0 M532.4 110.0 L516.4 340.0 M538.4 110.0 L522.4 340.0 M545.0 110.0 L529.0 340.0 " stroke="#8e7500" stroke-width="1" fill="none" shape-rendering="crispEdges"/><g><polygon points="326,324 332,306 347,300 356,286 368,255 374,235 385,209 391,203 412,195 454,189.5 476,194 503,204 521,226 529,252 538,280 546,316 564.7,344.5 549,345.3 558.4,359.4 544.4,361 547.5,370.3 530.3,371.9 519,381 503,384 470,388 436,388 412,383 400,374 393,373 373,368 368,361 351,362 346,354" fill="#0000c8" shape-rendering="crispEdges"/><polygon points="347,311 356,286 540,290 546,318 538,345 519,378 434,378 396,371 369,361 346,354" fill="#00b0ff" shape-rendering="crispEdges"/><polygon points="356,286 368,255 374,235 529,252 542,300 545,318 520,313 440,313 412,310 390,310 372,310 362,311 347,311" fill="#80ff80" shape-rendering="crispEdges"/><polygon points="374,235 380,236 362,311 347,311 356,286" fill="#b0ff50" shape-rendering="crispEdges"/><polygon points="380,236 386,238 384,274 379,290 365,334 358,318 362,311" fill="#80ff80" shape-rendering="crispEdges"/><polygon points="385,209 391,203 412,195 454,189.5 476,194 503,204 521,227 527,250 510,244 495,247 465,248 446,248 428,251 404,248 403,236 377,228" fill="#c80000" shape-rendering="crispEdges"/><polygon points="391,203 412,195 454,189.5 476,194 503,204 519,227 500,214 470,204 430,205 400,216 388,222" fill="#b00000" shape-rendering="crispEdges"/><polygon points="408,214 455,204 492,218 485,238 465,246 440,247 412,236" fill="#ee0000" shape-rendering="crispEdges"/><polygon points="404,236 428,240 446,248 428,253 404,248" fill="#b80000" shape-rendering="crispEdges"/><polygon points="495,240 508,236 512,250 500,255" fill="#c00000" shape-rendering="crispEdges"/><polygon points="393,200 399,203 395,207" fill="#ff8000" shape-rendering="crispEdges"/><polygon points="380,208 388,210 384,235 376,235" fill="#ffe000" shape-rendering="crispEdges"/><polygon points="377,228 403,236 385,270 380,258 376,235" fill="#ff4000" shape-rendering="crispEdges"/><polygon points="403,236 407,255 391,310 387,309 385,270" fill="#ffb000" shape-rendering="crispEdges"/><polygon points="404,248 428,251 412,299" fill="#ff7000" shape-rendering="crispEdges"/><polygon points="428,258 448,248 442,318 428.6,340" fill="#ffff00" shape-rendering="crispEdges"/><polygon points="446,248 465,248 470.6,280 446.6,305.6" fill="#ff7000" shape-rendering="crispEdges"/><polygon points="482,248 505,240 505,295 497,294 482,279" fill="#ff7000" shape-rendering="crispEdges"/><polygon points="465,248 482,248 482,279 470,280" fill="#ff1000" shape-rendering="crispEdges"/><polygon points="497,247 512,244 527,251 524,262 515,300 511,316 497,292" fill="#ffb800" shape-rendering="crispEdges"/><polygon points="506,242 514,240 511,253" fill="#ff5000" shape-rendering="crispEdges"/><polygon points="511,280 521.6,280 527.3,346.8 514,329.7 511,316" fill="#80ff80" shape-rendering="crispEdges"/><polygon points="527,251 529,253 541,300 528,300 524,262" fill="#c0ff40" shape-rendering="crispEdges"/><polygon points="521.6,280 537,290 545,325 540.7,360 527.3,346.8" fill="#00d0ff" shape-rendering="crispEdges"/><polygon points="515,344 529,344 541,361 530,372 515,373" fill="#0050f0" shape-rendering="crispEdges"/><polygon points="524,315.6 536,320 541,361 530,372" fill="#0090ff" shape-rendering="crispEdges"/><polygon points="440,316 446.6,305.6 470.6,278.6 481.7,278.6 497,292 511,316 514,329.7 514,369.8 498.6,358.3 482,350 449.7,358.75" fill="#70ffa0" shape-rendering="crispEdges"/><polygon points="428.6,340 442,318 448,305.6 449.7,358.75 432.5,377.5" fill="#00a0ff" shape-rendering="crispEdges"/><polygon points="497,292 511,316 514,329.7 514,369.8 505,345" fill="#00c0ff" shape-rendering="crispEdges"/><polygon points="379,290 384,274 389,300 384,321 368,359 365,334" fill="#00d0ff" shape-rendering="crispEdges"/><polygon points="384,321 389,300 392,310 373,367 368,359" fill="#0060ff" shape-rendering="crispEdges"/><polygon points="387,309 407,255 412,299 400,329 389,356 384,321" fill="#80ff80" shape-rendering="crispEdges"/><polygon points="410.6,304 428,258 428.6,340 410.6,360" fill="#80ff80" shape-rendering="crispEdges"/><polygon points="389,356 400,329 410.6,304 410.6,360 406,362 393,373" fill="#0090ff" shape-rendering="crispEdges"/><polygon points="410.6,360 428.6,340 432.5,377.5 412,383 406,362" fill="#0018f0" shape-rendering="crispEdges"/><polygon points="326,324 348,311 353,312 358,318 362,331 362,337 351,350 345,352" fill="#0014f8" shape-rendering="crispEdges"/><polygon points="345,352 362,337 368,361 351,362" fill="#0000d8" shape-rendering="crispEdges"/><polygon points="332,306 347,300 348,311 338,316" fill="#0008e0" shape-rendering="crispEdges"/><polygon points="432.5,377.5 449.7,358.75 470,350.7 489,352.6 498.6,358.3 517.7,381.2 503,384 470,388 436,388" fill="#0000f0" shape-rendering="crispEdges"/><polygon points="546,317 564.7,344.5 549,345.3" fill="#0020e8" shape-rendering="crispEdges"/><polygon points="541,339 558.4,359.4 544.4,361" fill="#0010d8" shape-rendering="crispEdges"/><polygon points="533.4,351.6 547.5,370.3 530.3,371.9" fill="#0000d8" shape-rendering="crispEdges"/></g><path d="M177.3 110.0 L146.8 549.0 M180.1 110.0 L165.2 325.0 M185.3 110.0 L169.1 343.5 M193.3 110.0 L176.1 357.5 M203.9 110.0 L185.8 371.0 M217.0 110.0 L198.0 384.0 M232.8 110.0 L212.9 396.0 M251.2 110.0 L230.5 408.0 M271.5 110.0 L250.0 419.0 M293.0 110.0 L270.9 428.5 M317.5 110.0 L294.7 438.0 M342.0 110.0 L318.7 445.5 M368.9 110.0 L345.1 452.5 M395.8 110.0 L371.6 458.5 M424.3 110.0 L399.7 463.5 M452.8 110.0 L428.0 467.0 M484.7 110.0 L459.8 469.0 M511.0 110.0 L486.0 470.0 M539.5 110.0 L514.5 469.5 M566.9 110.0 L542.0 468.0 M593.7 110.0 L569.0 465.5 M619.8 110.0 L595.4 461.0 M643.9 110.0 L619.9 456.0 M666.1 110.0 L642.5 450.0 M687.0 110.0 L663.9 442.5 M705.8 110.0 L683.3 434.0 M722.2 110.0 L700.3 424.5 M736.0 110.0 L714.8 415.0 M747.5 110.0 L727.1 404.0 M756.7 110.0 L737.0 393.0 M762.8 110.0 L743.9 382.0 " stroke="#0000b0" stroke-width="1" fill="none" shape-rendering="crispEdges"/><path d="M389.0 110.0 L375.9 298.6 M399.6 110.0 L386.0 306.4 M405.7 110.0 L391.8 310.6 M412.2 110.0 L397.9 315.8 M418.3 110.0 L403.7 320.6 M426.5 110.0 L411.4 327.2 M433.0 110.0 L417.6 331.6 M440.7 110.0 L425.0 335.9 M449.5 110.0 L433.5 340.7 M457.0 110.0 L440.7 344.9 M466.0 110.0 L449.3 349.8 M474.9 110.0 L458.1 351.7 M484.7 110.0 L468.0 351.0 M493.0 110.0 L476.3 350.5 M500.6 110.0 L483.9 349.7 M508.3 110.0 L491.9 345.9 M516.5 110.0 L500.4 341.8 M524.0 110.0 L508.2 338.0 M530.7 110.0 L515.1 334.8 M536.2 110.0 L520.7 333.4 M542.8 110.0 L527.4 331.8 M382.5 110.0 L373.7 236.6 M383.5 110.0 L374.6 237.8 M384.5 110.0 L375.5 239.0 M386.0 110.0 L376.9 240.8 M387.5 110.0 L378.3 242.6 M393.5 110.0 L383.8 249.8 M395.5 110.0 L385.6 252.2 M397.5 110.0 L387.5 254.6 M547.5 110.0 L532.2 330.6 M549.3 110.0 L534.0 330.2 M550.5 110.0 L535.2 329.5 M552.6 110.0 L537.5 327.6 M554.0 110.0 L539.0 326.4 M555.3 110.0 L540.4 325.2 M556.6 110.0 L541.7 324.0 M558.0 110.0 L543.2 322.7 M559.3 110.0 L544.6 321.5 M560.5 110.0 L545.9 320.5 M355.9 492.3 L352.0 549.0 M356.9 492.2 L353.0 549.0 M358.0 492.1 L354.0 549.0 M359.5 492.0 L355.5 549.0 M361.0 491.9 L357.0 549.0 M362.5 491.7 L358.5 549.0 M364.9 491.5 L360.9 549.0 M367.0 491.4 L363.0 549.0 M369.0 491.2 L365.0 549.0 M371.0 491.0 L367.0 549.0 M373.1 490.9 L369.1 549.0 M374.8 490.7 L370.8 549.0 M379.3 490.4 L375.2 549.0 M380.9 490.2 L376.8 549.0 M385.8 489.8 L381.7 549.0 M387.5 489.7 L383.4 549.0 M391.9 489.3 L387.8 549.0 M393.7 489.2 L389.5 549.0 M400.2 488.7 L396.0 549.0 M401.7 488.5 L397.5 549.0 M406.7 488.1 L402.5 549.0 M408.4 488.0 L404.2 549.0 M414.5 487.5 L410.2 549.0 M416.8 487.3 L412.5 549.0 M423.3 486.8 L419.0 549.0 M424.8 486.7 L420.5 549.0 M430.9 486.2 L426.5 549.0 M433.2 486.0 L428.8 549.0 M439.9 485.4 L435.5 549.0 M442.2 485.2 L437.8 549.0 M448.9 484.7 L444.4 549.0 M451.0 484.5 L446.5 549.0 M458.7 483.9 L454.2 549.0 M460.4 483.8 L455.9 549.0 M467.1 483.2 L462.5 549.0 M468.7 483.1 L464.1 549.0 M474.7 482.6 L470.1 549.0 M476.9 482.4 L472.3 549.0 M482.5 482.0 L477.8 549.0 M484.2 481.8 L479.5 549.0 M490.7 481.3 L486.0 549.0 M492.9 481.1 L488.2 549.0 M498.2 480.7 L493.5 549.0 M500.1 480.5 L495.3 549.0 M505.0 480.1 L500.2 549.0 M506.7 480.0 L501.9 549.0 M510.5 479.7 L505.7 549.0 M512.7 479.5 L507.9 549.0 M517.2 479.1 L512.3 549.0 M519.4 479.0 L514.5 549.0 M521.9 478.8 L517.0 549.0 M523.7 478.6 L518.8 549.0 M524.9 478.5 L520.0 549.0 M527.0 478.3 L522.1 549.0 M528.4 478.2 L523.5 549.0 M529.7 478.1 L524.8 549.0 M531.0 478.0 L526.1 549.0 M532.4 477.9 L527.5 549.0 M533.7 477.8 L528.8 549.0 M535.0 477.7 L530.0 549.0 " stroke="#8e7500" stroke-width="1" fill="none" shape-rendering="crispEdges"/><path d="M349.4 492.8 L345.5 549.0 M369.3 491.2 L365.3 549.0 M378.2 490.5 L374.1 549.0 M398.0 488.8 L393.8 549.0 M406.2 488.2 L402.0 549.0 M426.6 486.5 L422.3 549.0 M434.9 485.8 L430.5 549.0 M458.7 483.9 L454.2 549.0 M464.6 483.4 L460.0 549.0 M485.2 481.7 L480.5 549.0 M493.2 481.1 L488.5 549.0 M513.8 479.4 L509.0 549.0 M521.4 478.8 L516.5 549.0 M541.4 477.2 L536.4 549.0 " stroke="#0000b0" stroke-width="1" fill="none" shape-rendering="crispEdges"/><defs><linearGradient id="jet" x1="0" y1="0" x2="0" y2="1"><stop offset="0" stop-color="#800000"/><stop offset="0.125" stop-color="#ff0000"/><stop offset="0.375" stop-color="#ffff00"/><stop offset="0.625" stop-color="#00ffff"/><stop offset="0.875" stop-color="#0000ff"/><stop offset="1" stop-color="#000080"/></linearGradient></defs><rect x="881" y="124" width="25" height="425" fill="url(#jet)"/><g shape-rendering="crispEdges"><path d="M831.5 507 V476" stroke="#0000ff" stroke-width="1.5"/><path d="M829 482 L832 473 L835 482 Z" fill="#0000ff"/><path d="M841 498.5 L801 501.5" stroke="#00ff00" stroke-width="1.5"/><path d="M804 501 L811 498 L811 504 Z" fill="#00ff00"/><path d="M833.5 503 L822 485" stroke="#ff0000" stroke-width="1.2"/><path d="M822 485 L828 490 L823 492 Z" fill="#ff0000"/><path d="M824 484 L830 492 M830 484 L824 492" stroke="#ff0000" stroke-width="1"/><path d="M805 503 L808.5 507 L812 503 M808.5 507 V513" stroke="#00ff00" stroke-width="1.2" fill="none"/><path d="M841 459.5 H847 L841 468 H847" stroke="#0000ff" stroke-width="1.2" fill="none"/></g></svg>
<div style="position:absolute;left:7px;top:549px;width:899px;height:20px;background:#f0f0f0"></div>
<div style="position:absolute;left:485px;top:551px;width:1px;height:16px;background:#cfcfcf"></div>
<div style="position:absolute;left:557px;top:551px;width:1px;height:16px;background:#cfcfcf"></div>
<div style="position:absolute;left:608px;top:551px;width:1px;height:16px;background:#cfcfcf"></div>
<div style="position:absolute;left:762px;top:551px;width:1px;height:16px;background:#cfcfcf"></div>
<div style="position:absolute;left:887px;top:551px;width:1px;height:16px;background:#cfcfcf"></div>
<div style="position:absolute;left:900px;top:559px;width:2px;height:2px;background:#b4b4b4"></div>
<div style="position:absolute;left:897px;top:562px;width:2px;height:2px;background:#b4b4b4"></div>
<div style="position:absolute;left:900px;top:562px;width:2px;height:2px;background:#b4b4b4"></div>
<div style="position:absolute;left:894px;top:565px;width:2px;height:2px;background:#b4b4b4"></div>
<div style="position:absolute;left:897px;top:565px;width:2px;height:2px;background:#b4b4b4"></div>
<div style="position:absolute;left:900px;top:565px;width:2px;height:2px;background:#b4b4b4"></div>
<div style="position:absolute;left:68.40px;top:39.99px;font-size:11px;line-height:11px;white-space:pre;color:#000;transform-origin:0 0;transform:scaleX(0.9619);">Components</div>
<div style="position:absolute;left:178.80px;top:39.99px;font-size:11px;line-height:11px;white-space:pre;color:#000;transform-origin:0 0;transform:scaleX(0.9449);">2D Surface</div>
<div style="position:absolute;left:283.00px;top:39.99px;font-size:11px;line-height:11px;white-space:pre;color:#000;transform-origin:0 0;transform:scaleX(0.9342);">2D Thermal</div>
<div style="position:absolute;left:387.00px;top:39.99px;font-size:11px;line-height:11px;white-space:pre;color:#000;transform-origin:0 0;transform:scaleX(0.9314);">3D Vector</div>
<div style="position:absolute;left:483.80px;top:39.99px;font-size:11px;line-height:11px;white-space:pre;color:#000;transform-origin:0 0;transform:scaleX(0.9298);">3D Viewer</div>
<div style="position:absolute;left:582.20px;top:39.99px;font-size:11px;line-height:11px;white-space:pre;color:#000;transform-origin:0 0;transform:scaleX(0.9507);">Display</div>
<div style="position:absolute;left:667.40px;top:39.99px;font-size:11px;line-height:11px;white-space:pre;color:#000;transform-origin:0 0;transform:scaleX(0.9946);">Structure</div>
<div style="position:absolute;left:762.30px;top:38.99px;font-size:11px;line-height:11px;white-space:pre;color:#000;transform-origin:0 0;transform:scaleX(0.9591);">Envelope</div>
<div style="position:absolute;left:857.40px;top:39.99px;font-size:11px;line-height:11px;white-space:pre;color:#000;transform-origin:0 0;transform:scaleX(1.0190);">Export</div>
<div style="position:absolute;left:35.50px;top:87.39px;font-size:11px;line-height:11px;white-space:pre;color:#000;transform-origin:0 0;transform:scaleX(0.9624);">Max</div>
<div style="position:absolute;left:64.50px;top:87.39px;font-size:11px;line-height:11px;white-space:pre;color:#8d8d8d;transform-origin:0 0;transform:scaleX(1.0115);">Avr</div>
<div style="position:absolute;left:90.40px;top:87.39px;font-size:11px;line-height:11px;white-space:pre;color:#8d8d8d;transform-origin:0 0;transform:scaleX(0.8747);">DC</div>
<div style="position:absolute;left:113.00px;top:87.39px;font-size:11px;line-height:11px;white-space:pre;color:#8d8d8d;transform-origin:0 0;transform:scaleX(1.0237);">Heat</div>
<div style="position:absolute;left:148.30px;top:87.39px;font-size:11px;line-height:11px;white-space:pre;color:#8d8d8d;transform-origin:0 0;transform:scaleX(0.9480);">Max</div>
<div style="position:absolute;left:177.50px;top:87.39px;font-size:11px;line-height:11px;white-space:pre;color:#8d8d8d;transform-origin:0 0;transform:scaleX(0.9931);">Avr</div>
<div style="position:absolute;left:203.50px;top:87.39px;font-size:11px;line-height:11px;white-space:pre;color:#8d8d8d;transform-origin:0 0;transform:scaleX(0.9048);">Max EH</div>
<div style="position:absolute;left:248.60px;top:87.39px;font-size:11px;line-height:11px;white-space:pre;color:#8d8d8d;transform-origin:0 0;transform:scaleX(0.9498);">Avr EH</div>
<div style="position:absolute;left:293.60px;top:87.39px;font-size:11px;line-height:11px;white-space:pre;color:#8d8d8d;transform-origin:0 0;transform:scaleX(0.9512);">Avr S</div>
<div style="position:absolute;left:331.40px;top:87.39px;font-size:11px;line-height:11px;white-space:pre;color:#000;transform-origin:0 0;transform:scaleX(0.9167);">Limit</div>
<div style="position:absolute;left:364.70px;top:87.39px;font-size:11px;line-height:11px;white-space:pre;color:#000;transform-origin:0 0;transform:scaleX(0.9511);">Amplify</div>
<div style="position:absolute;left:409.00px;top:87.39px;font-size:11px;line-height:11px;white-space:pre;color:#000;transform-origin:0 0;transform:scaleX(1.0040);">Adjust</div>
<div style="position:absolute;left:449.00px;top:87.39px;font-size:11px;line-height:11px;white-space:pre;color:#000;transform-origin:0 0;transform:scaleX(1.0192);">Attenuate</div>
<div style="position:absolute;left:509.40px;top:87.39px;font-size:11px;line-height:11px;white-space:pre;color:#000;transform-origin:0 0;transform:scaleX(0.9349);">Save Plane</div>
<div style="position:absolute;left:571.80px;top:87.39px;font-size:11px;line-height:11px;white-space:pre;color:#000;transform-origin:0 0;transform:scaleX(0.9120);">Save Vol</div>
<div style="position:absolute;left:725.40px;top:87.39px;font-size:11px;line-height:11px;white-space:pre;color:#000;transform-origin:0 0;transform:scaleX(0.9313);">Display</div>
<div style="position:absolute;left:768.80px;top:87.39px;font-size:11px;line-height:11px;white-space:pre;color:#000;transform-origin:0 0;transform:scaleX(0.9901);">Structure</div>
<div style="position:absolute;left:822.80px;top:87.39px;font-size:11px;line-height:11px;white-space:pre;color:#000;transform-origin:0 0;transform:scaleX(0.9548);">Toolbars</div>
<div style="position:absolute;left:876.00px;top:87.39px;font-size:11px;line-height:11px;white-space:pre;color:#000;transform-origin:0 0;transform:scaleX(0.9282);">Help</div>
<div style="position:absolute;left:32.00px;top:12.88px;font-size:15.5px;line-height:15.5px;white-space:pre;color:#000;transform-origin:0 0;transform:scaleX(1.0005);">2D/3D Fields Distribution /DYN /Env Max</div>
<div style="position:absolute;left:383.30px;top:554.99px;font-size:11px;line-height:11px;white-space:pre;color:#000;transform-origin:0 0;transform:scaleX(1.0316);">Start at=49982/ 443</div>
<div style="position:absolute;left:489.80px;top:554.99px;font-size:11px;line-height:11px;white-space:pre;color:#000;transform-origin:0 0;transform:scaleX(1.0190);">f_exc:  2.450</div>
<div style="position:absolute;left:560.80px;top:554.99px;font-size:11px;line-height:11px;white-space:pre;color:#000;transform-origin:0 0;transform:scaleX(0.9035);">Plane: XY</div>
<div style="position:absolute;left:612.00px;top:554.99px;font-size:11px;line-height:11px;white-space:pre;color:#000;transform-origin:0 0;transform:scaleX(0.9940);">Layer=52(148.52942 mm)/103</div>
<div style="position:absolute;left:765.60px;top:554.99px;font-size:11px;line-height:11px;white-space:pre;color:#000;transform-origin:0 0;transform:scaleX(0.9755);">Name: cwgcir 1/1</div>
<div style="position:absolute;left:853.60px;top:110.69px;font-size:11px;line-height:11px;white-space:pre;color:#000;transform-origin:0 0;transform:scaleX(0.9317);">[W/mm^3]</div>
<div style="position:absolute;left:791.70px;top:130.69px;font-size:11px;line-height:11px;white-space:pre;color:#000;transform-origin:0 0;transform:scaleX(0.9822);">4.492593e-03</div>
<div style="position:absolute;left:791.70px;top:534.69px;font-size:11px;line-height:11px;white-space:pre;color:#000;transform-origin:0 0;transform:scaleX(0.9438);">0.000000e+00</div>
</div></body></html>
